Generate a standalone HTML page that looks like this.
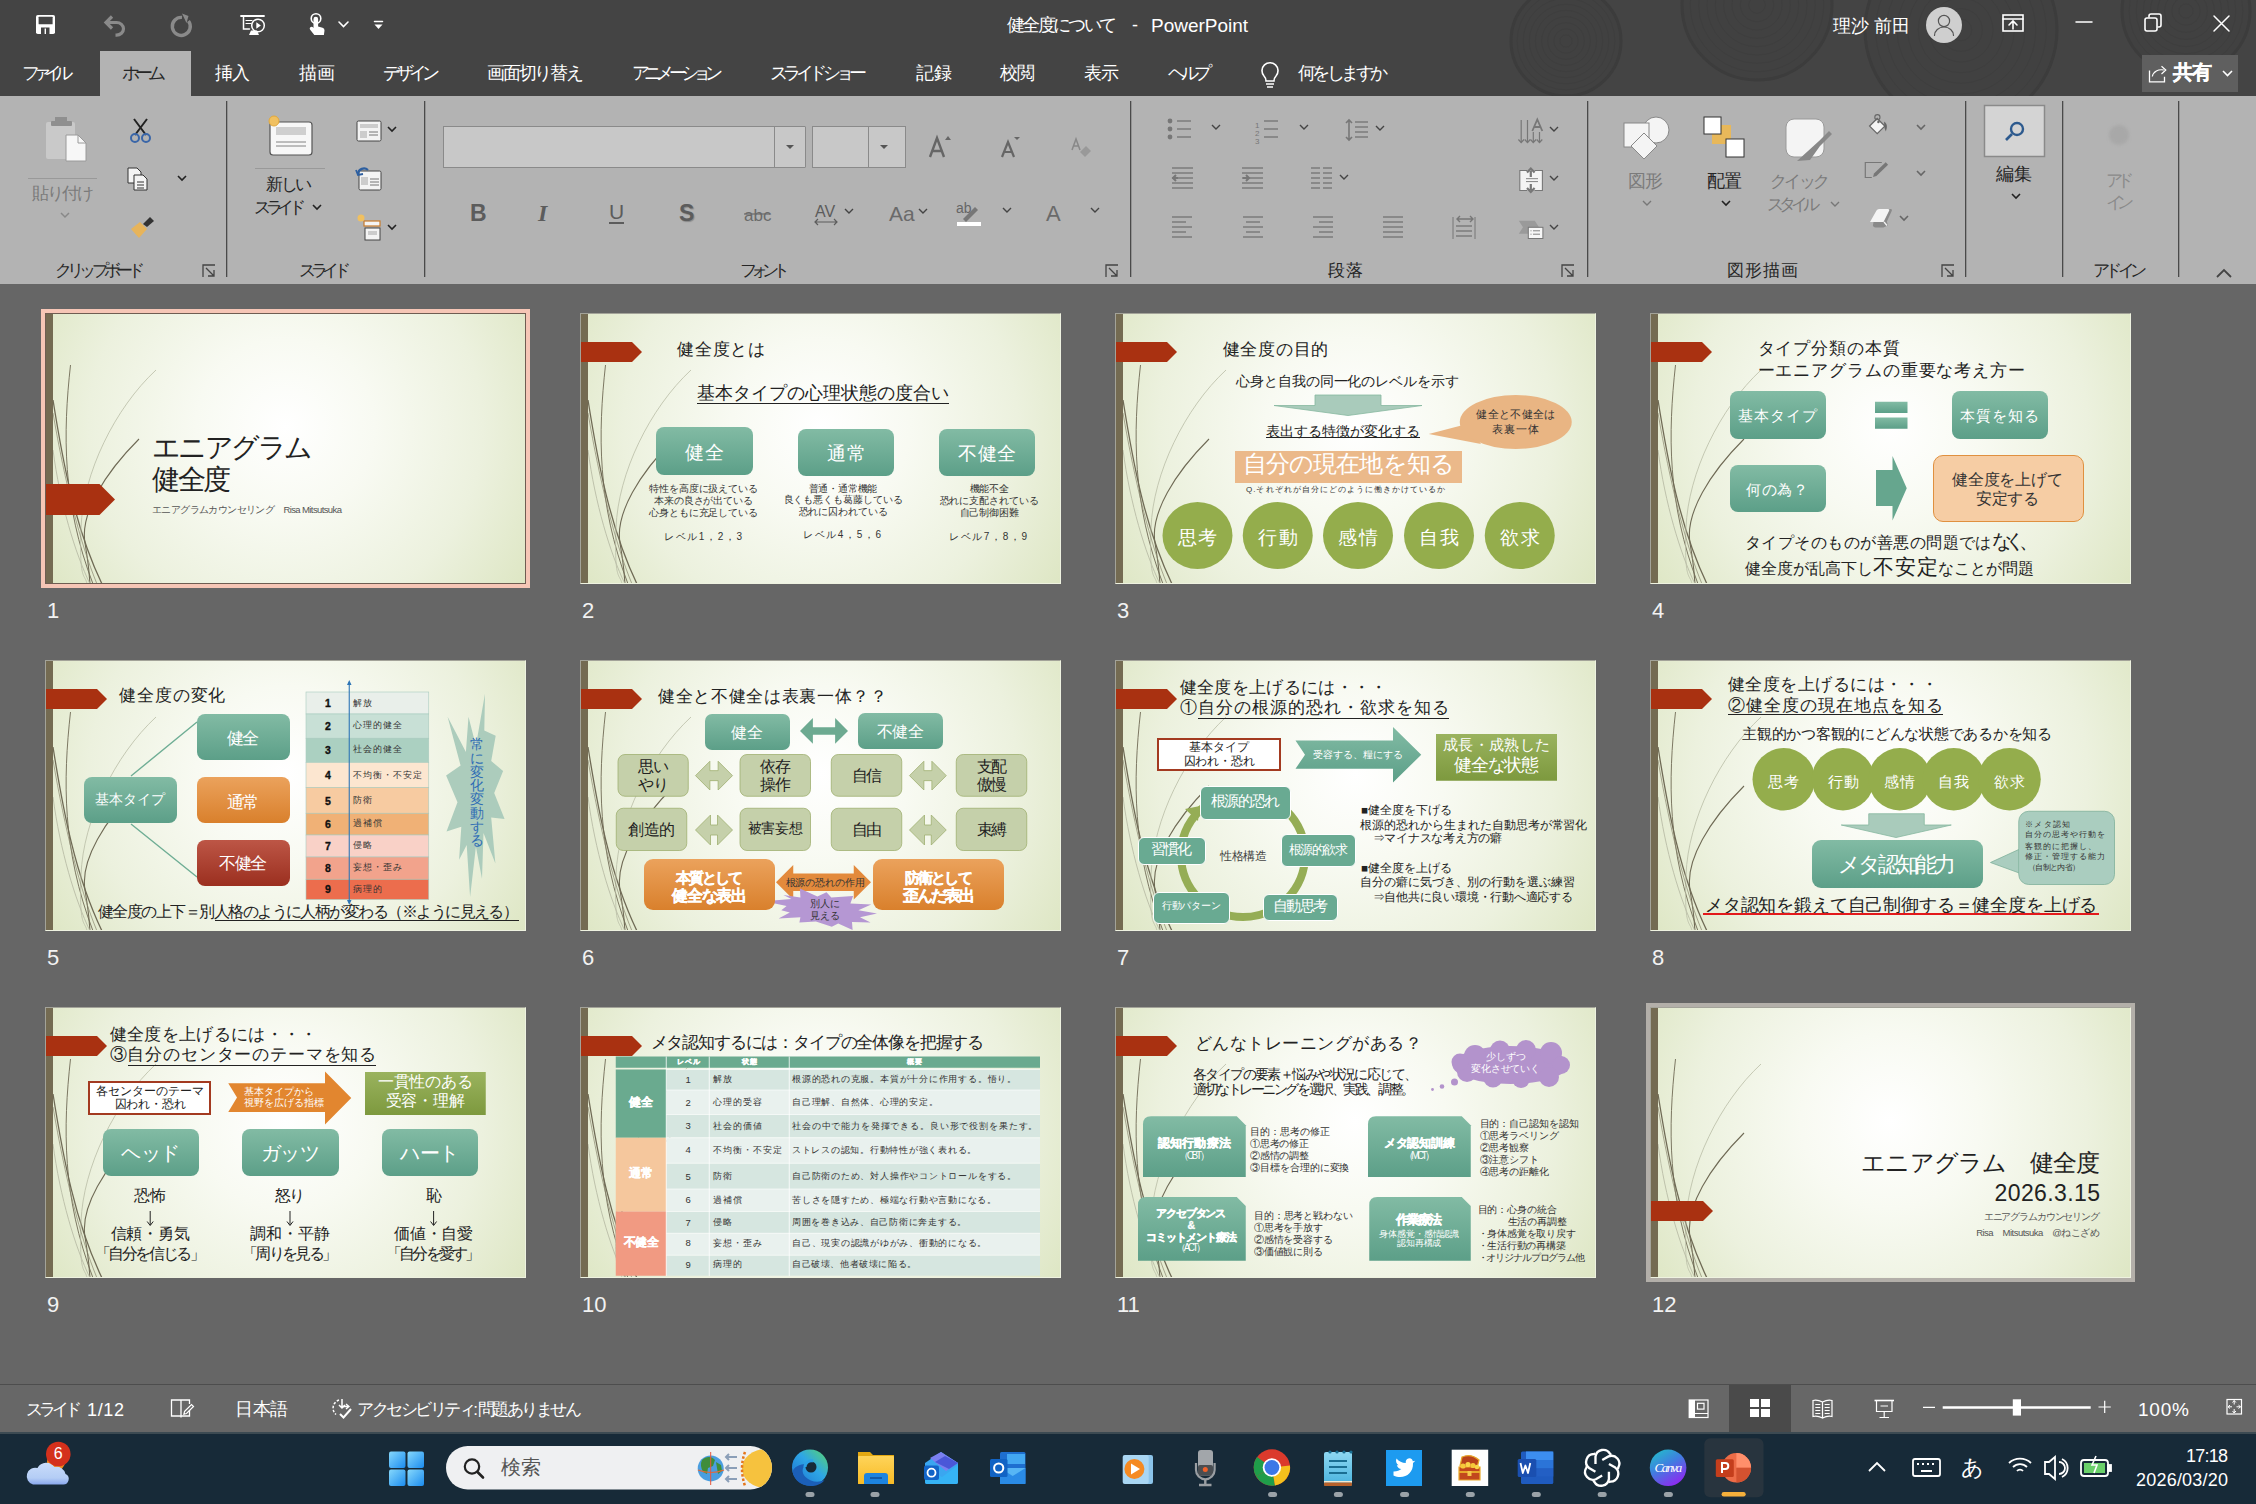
<!DOCTYPE html><html lang="ja"><head><meta charset="utf-8"><style>
html,body{margin:0;padding:0}
body{width:2256px;height:1504px;overflow:hidden;position:relative;background:#666666;font-family:"Liberation Sans",sans-serif}
.t{position:absolute;white-space:pre}
.sl{position:absolute;width:481px;height:271px;overflow:hidden;background:radial-gradient(ellipse 62% 108% at 50% 42%,#ffffff 0%,#f8faf2 30%,#ecf1de 66%,#dce5c1 100%)}
svg{overflow:visible}
</style></head><body><div style="position:absolute;left:0px;top:0px;width:2256px;height:96px;background:#444444"></div><svg style="position:absolute;left:0;top:0;overflow:hidden" width="2256" height="96"><circle cx="1566" cy="41" r="55" fill="#414141" stroke="#3c3c3c" stroke-width="3"/><circle cx="1566" cy="41" r="6.1" fill="none" stroke="#3e3e3e" stroke-width="1"/><circle cx="1566" cy="41" r="12.2" fill="none" stroke="#3e3e3e" stroke-width="1"/><circle cx="1566" cy="41" r="18.3" fill="none" stroke="#3e3e3e" stroke-width="1"/><circle cx="1566" cy="41" r="24.4" fill="none" stroke="#3e3e3e" stroke-width="1"/><circle cx="1566" cy="41" r="30.6" fill="none" stroke="#3e3e3e" stroke-width="1"/><circle cx="1566" cy="41" r="36.7" fill="none" stroke="#3e3e3e" stroke-width="1"/><circle cx="1566" cy="41" r="42.8" fill="none" stroke="#3e3e3e" stroke-width="1"/><circle cx="1566" cy="41" r="48.9" fill="none" stroke="#3e3e3e" stroke-width="1"/><circle cx="1757" cy="5" r="75" fill="#414141" stroke="#3c3c3c" stroke-width="3"/><circle cx="1757" cy="5" r="8.3" fill="none" stroke="#3e3e3e" stroke-width="1"/><circle cx="1757" cy="5" r="16.7" fill="none" stroke="#3e3e3e" stroke-width="1"/><circle cx="1757" cy="5" r="25.0" fill="none" stroke="#3e3e3e" stroke-width="1"/><circle cx="1757" cy="5" r="33.3" fill="none" stroke="#3e3e3e" stroke-width="1"/><circle cx="1757" cy="5" r="41.7" fill="none" stroke="#3e3e3e" stroke-width="1"/><circle cx="1757" cy="5" r="50.0" fill="none" stroke="#3e3e3e" stroke-width="1"/><circle cx="1757" cy="5" r="58.3" fill="none" stroke="#3e3e3e" stroke-width="1"/><circle cx="1757" cy="5" r="66.7" fill="none" stroke="#3e3e3e" stroke-width="1"/><circle cx="1961" cy="30" r="96" fill="#414141" stroke="#3c3c3c" stroke-width="3"/><circle cx="1961" cy="30" r="10.7" fill="none" stroke="#3e3e3e" stroke-width="1"/><circle cx="1961" cy="30" r="21.3" fill="none" stroke="#3e3e3e" stroke-width="1"/><circle cx="1961" cy="30" r="32.0" fill="none" stroke="#3e3e3e" stroke-width="1"/><circle cx="1961" cy="30" r="42.7" fill="none" stroke="#3e3e3e" stroke-width="1"/><circle cx="1961" cy="30" r="53.3" fill="none" stroke="#3e3e3e" stroke-width="1"/><circle cx="1961" cy="30" r="64.0" fill="none" stroke="#3e3e3e" stroke-width="1"/><circle cx="1961" cy="30" r="74.7" fill="none" stroke="#3e3e3e" stroke-width="1"/><circle cx="1961" cy="30" r="85.3" fill="none" stroke="#3e3e3e" stroke-width="1"/><circle cx="2186" cy="11" r="64" fill="#414141" stroke="#3c3c3c" stroke-width="3"/><circle cx="2186" cy="11" r="7.1" fill="none" stroke="#3e3e3e" stroke-width="1"/><circle cx="2186" cy="11" r="14.2" fill="none" stroke="#3e3e3e" stroke-width="1"/><circle cx="2186" cy="11" r="21.3" fill="none" stroke="#3e3e3e" stroke-width="1"/><circle cx="2186" cy="11" r="28.4" fill="none" stroke="#3e3e3e" stroke-width="1"/><circle cx="2186" cy="11" r="35.6" fill="none" stroke="#3e3e3e" stroke-width="1"/><circle cx="2186" cy="11" r="42.7" fill="none" stroke="#3e3e3e" stroke-width="1"/><circle cx="2186" cy="11" r="49.8" fill="none" stroke="#3e3e3e" stroke-width="1"/><circle cx="2186" cy="11" r="56.9" fill="none" stroke="#3e3e3e" stroke-width="1"/></svg><svg style="position:absolute;left:0;top:0" width="2256" height="48" fill="none" stroke-linecap="round"><rect x="36" y="15" width="19" height="19" rx="1.8" fill="#fff" stroke="none"/><rect x="38.6" y="16.7" width="14" height="7.5" rx="0.5" fill="#444" stroke="none"/><rect x="41" y="27.5" width="8.5" height="6.5" fill="#444" stroke="none"/><rect x="44.6" y="28.5" width="1.4" height="5.5" fill="#fff" stroke="none"/><path d="M106.5 22.5h10a7 6.3 0 0 1 0 12.6h-1" stroke="#8a8a8a" stroke-width="3.2" stroke-linecap="butt"/><path d="M112 16.5l-6 6 6 6" stroke="#8a8a8a" stroke-width="3.2" stroke-linecap="butt" stroke-linejoin="miter"/><path d="M188.5 21a9 9 0 1 1-6.5-3.6" stroke="#8a8a8a" stroke-width="3.4" stroke-linecap="butt"/><path d="M182 13.5l6.5 2.5-2 7z" fill="#8a8a8a" stroke="none"/><path d="M241 16h23" stroke="#fff" stroke-width="1.8"/><path d="M243.5 17.5v11.5h6" stroke="#fff" stroke-width="1.5"/><path d="M246 20.5h6M246 23.5h5" stroke="#fff" stroke-width="1.2"/><circle cx="258" cy="25.5" r="6.3" stroke="#fff" stroke-width="1.5"/><path d="M256.3 22.3l4.6 3.2-4.6 3.2z" fill="#fff" stroke="none"/><path d="M251 30.5l-2 4.5h10l-2-4.5" fill="#fff" stroke="none"/><circle cx="316" cy="18.5" r="4.8" stroke="#fff" stroke-width="1.6"/><path d="M313.5 19a2.3 2.3 0 0 1 4.6 0v7.5l4.5 1.2a2.6 2.6 0 0 1 1.9 2.7l-.6 4.6h-9.6l-4.3-5.5a1.8 1.8 0 0 1 2.6-2.4l.9.9z" fill="#fff" stroke="none"/><path d="M339 22l4.5 4.5 4.5-4.5" stroke="#fff" stroke-width="1.6"/><path d="M374.5 21.5h8" stroke="#fff" stroke-width="1.5"/><path d="M374.5 24.5h8l-4 4.5z" fill="#fff" stroke="none"/><circle cx="1944" cy="25" r="18" fill="#cfcfcf"/><circle cx="1944" cy="21" r="5.6" stroke="#555" stroke-width="1.2"/><path d="M1934.5 35.5a9.5 8.5 0 0 1 19 0" stroke="#555" stroke-width="1.2"/><rect x="2003" y="15" width="20" height="16" stroke="#fff" stroke-width="1.6"/><path d="M2003 19h20M2013 29v-8M2009 25l4-4 4 4" stroke="#fff" stroke-width="1.6"/><path d="M2076 22h16" stroke="#fff" stroke-width="1.5"/><rect x="2145" y="18" width="12" height="13" rx="2" stroke="#fff" stroke-width="1.6"/><path d="M2149 17v-1a2 2 0 0 1 2-2h8a2 2 0 0 1 2 2v9a2 2 0 0 1-2 2h-1" stroke="#fff" stroke-width="1.6"/><path d="M2214 16l15 15M2229 16l-15 15" stroke="#fff" stroke-width="1.5"/></svg><div class="t" style="left:1007.0px;top:16.4px;font-size:18px;line-height:18px;color:#ffffff;letter-spacing:-2.67px;">健全度について</div><div class="t" style="left:1132.0px;top:16.4px;font-size:18px;line-height:18px;color:#ffffff;">-</div><div class="t" style="left:1151.0px;top:15.9px;font-size:19px;line-height:19px;color:#ffffff;letter-spacing:-0.02px;">PowerPoint</div><div class="t" style="left:1833.0px;top:16.8px;font-size:18px;line-height:18px;color:#ffffff;letter-spacing:-0.00px;">理沙 前田</div><div style="position:absolute;left:100px;top:51px;width:91px;height:45px;background:#b3b3b3"></div><div class="t" style="left:22.0px;top:65.2px;font-size:17.5px;line-height:17.5px;color:#ffffff;letter-spacing:-7.00px;">ファイル</div><div class="t" style="left:122.0px;top:65.2px;font-size:17.5px;line-height:17.5px;color:#262626;letter-spacing:-5.00px;">ホーム</div><div class="t" style="left:215.0px;top:65.2px;font-size:17.5px;line-height:17.5px;color:#ffffff;letter-spacing:-1.00px;">挿入</div><div class="t" style="left:299.0px;top:65.2px;font-size:17.5px;line-height:17.5px;color:#ffffff;">描画</div><div class="t" style="left:383.0px;top:65.2px;font-size:17.5px;line-height:17.5px;color:#ffffff;letter-spacing:-5.00px;">デザイン</div><div class="t" style="left:487.0px;top:65.2px;font-size:17.5px;line-height:17.5px;color:#ffffff;letter-spacing:-2.20px;">画面切り替え</div><div class="t" style="left:632.0px;top:65.2px;font-size:17.5px;line-height:17.5px;color:#ffffff;letter-spacing:-5.83px;">アニメーション</div><div class="t" style="left:770.0px;top:65.2px;font-size:17.5px;line-height:17.5px;color:#ffffff;letter-spacing:-4.84px;">スライド ショー</div><div class="t" style="left:916.0px;top:65.2px;font-size:17.5px;line-height:17.5px;color:#ffffff;">記録</div><div class="t" style="left:1000.0px;top:65.2px;font-size:17.5px;line-height:17.5px;color:#ffffff;letter-spacing:-1.00px;">校閲</div><div class="t" style="left:1084.0px;top:65.2px;font-size:17.5px;line-height:17.5px;color:#ffffff;letter-spacing:-1.00px;">表示</div><div class="t" style="left:1168.0px;top:65.2px;font-size:17.5px;line-height:17.5px;color:#ffffff;letter-spacing:-5.00px;">ヘルプ</div><div class="t" style="left:1298.0px;top:65.2px;font-size:17.5px;line-height:17.5px;color:#ffffff;letter-spacing:-3.60px;">何をしますか</div><svg style="position:absolute;left:1255px;top:56px" width="30" height="34" fill="none" stroke="#fff" stroke-width="1.6"><path d="M9 20a8 8 0 1 1 12 0c-1.5 1.6-2 3-2 5h-8c0-2-.5-3.4-2-5z"/><path d="M11 28h8M12 31h6"/></svg><div style="position:absolute;left:2142px;top:55px;width:96px;height:37px;background:#5f5f5f"></div><svg style="position:absolute;left:2140px;top:50px" width="40" height="40" fill="none" stroke="#fff" stroke-width="1.3"><path d="M9.5 20.5v11.3h15v-5"/><path d="M12.3 26.5c1-5 6-7.5 11.5-6.5M21.5 16.3l4.3 3.7-4.3 4" stroke-width="1.2"/></svg><div class="t" style="left:2173.4px;top:62.9px;font-size:19.5px;line-height:19.5px;color:#ffffff;letter-spacing:-1.20px;font-weight:700;-webkit-text-stroke:0.35px #ffffff;">共有</div><svg style="position:absolute;left:2220px;top:67px" width="14" height="12" fill="none" stroke="#fff" stroke-width="1.6"><path d="M3 4l4.5 4.5 4.5-4.5"/></svg><div style="position:absolute;left:0px;top:96px;width:2256px;height:188px;background:#b3b3b3"></div><svg style="position:absolute;left:0;top:96px" width="2256" height="188" fill="none" stroke-linecap="butt"><rect x="226" y="5" width="1.3" height="176" fill="#4a4a4a" stroke="none"/><rect x="424" y="5" width="1.3" height="176" fill="#4a4a4a" stroke="none"/><rect x="1130" y="5" width="1.3" height="176" fill="#4a4a4a" stroke="none"/><rect x="1587" y="5" width="1.3" height="176" fill="#4a4a4a" stroke="none"/><rect x="1965" y="5" width="1.3" height="176" fill="#4a4a4a" stroke="none"/><rect x="2062" y="5" width="1.3" height="176" fill="#4a4a4a" stroke="none"/><rect x="2178" y="5" width="1.3" height="176" fill="#4a4a4a" stroke="none"/><rect x="46" y="26" width="29" height="37" rx="2" fill="#c9c9c9"/><rect x="55" y="21" width="12" height="7" fill="#8f8f8f"/><rect x="51" y="25" width="21" height="5" rx="1" fill="#8f8f8f"/><path d="M66 39h12l8 8v18H66z" fill="#f7f7f7" stroke="#9a9a9a" stroke-width="1"/><path d="M78 39v8h8" stroke="#9a9a9a" stroke-width="1"/><rect x="28" y="82" width="69" height="1" fill="#999" stroke="none"/><path d="M61 117l4 4 4-4" stroke="#888" stroke-width="1.5" fill="none"/><path d="M134 23l12 16M147 23l-12 16" stroke="#222" stroke-width="2"/><circle cx="135" cy="42" r="4" stroke="#3a66a8" stroke-width="2"/><circle cx="146" cy="42" r="4" stroke="#3a66a8" stroke-width="2"/><path d="M128 72h9l4 4v11h-13z" fill="#f4f4f4" stroke="#333" stroke-width="1"/><path d="M134 79h9l4 4v11h-13z" fill="#f4f4f4" stroke="#333" stroke-width="1"/><path d="M137 86h7M137 89h7M137 92h7" stroke="#333" stroke-width="1"/><path d="M178 80l4 4 4-4" stroke="#222" stroke-width="1.6" fill="none"/><path d="M131 133l9-7 7 7-8 9z" fill="#e7b45b"/><path d="M143 128l7-7 4 4-7 6z" fill="#333"/><path d="M203 181v-12h12M206 172l8 8M208 180h6v-6" stroke="#444" stroke-width="1.3" fill="none"/><rect x="270" y="26" width="42" height="33" rx="3" fill="#f7f7f7" stroke="#555" stroke-width="1.2"/><rect x="276" y="31" width="30" height="8" fill="#cfcfcf"/><path d="M276 46h30M276 50h30" stroke="#666" stroke-width="0.8"/><circle cx="274" cy="25" r="5" fill="#f0c060" stroke="#e2a93c" stroke-width="1"/><rect x="255" y="72" width="70" height="1" fill="#999" stroke="none"/><rect x="357" y="25" width="24" height="20" rx="1.5" fill="#f4f4f4" stroke="#444" stroke-width="1"/><rect x="360" y="28" width="18" height="4" fill="#ccc"/><rect x="360" y="35" width="7" height="7" fill="#ccc"/><path d="M369 36h9M369 39h9" stroke="#555" stroke-width="0.8"/><path d="M388 31l4 4 4-4" stroke="#222" stroke-width="1.6" fill="none"/><rect x="359" y="75" width="22" height="19" rx="1.5" fill="#f4f4f4" stroke="#444" stroke-width="1"/><rect x="361" y="81" width="7" height="8" fill="#ccc"/><path d="M370 83h9M370 86h9M370 89h9" stroke="#555" stroke-width="0.8"/><path d="M358 78a6 6 0 0 1 10-4" stroke="#2d5fa0" stroke-width="2.2"/><path d="M356 74l2 5 5-1" stroke="#2d5fa0" stroke-width="1.8"/><rect x="364" y="125" width="16" height="5" fill="#f4f4f4" stroke="#c77a2a" stroke-width="1.2"/><rect x="365" y="132" width="15" height="12" fill="#f4f4f4" stroke="#444" stroke-width="1"/><rect x="368" y="135" width="9" height="4" fill="#ccc"/><circle cx="361" cy="122" r="3.5" fill="#f0c060"/><path d="M388 129l4 4 4-4" stroke="#222" stroke-width="1.6" fill="none"/><rect x="443.5" y="30.5" width="462" height="41" fill="#c8c8c8" stroke="#8a8a8a" stroke-width="1"/><path d="M774.5 30.5v41M812.5 30.5v41M868.5 30.5v41" stroke="#8a8a8a" stroke-width="1"/><rect x="805" y="30" width="7" height="42" fill="#b3b3b3" stroke="none"/><path d="M805.5 30.5v41" stroke="#8a8a8a"/><path d="M786 49h8l-4 4z" fill="#555"/><path d="M880 49h8l-4 4z" fill="#555"/><path d="M930 61l7-19 7 19M933 55h9" stroke="#666" stroke-width="2.4"/><path d="M945 44l3-4 3 4z" fill="#666"/><path d="M1002 61l6-15 6 15M1005 56h7" stroke="#666" stroke-width="2.2"/><path d="M1014 41h6l-3 3z" fill="#666"/><path d="M1072 54l4-11 4 11M1073 50h6" stroke="#888" stroke-width="1.5"/><path d="M1080 56l6-6 5 5-6 6z" fill="#999"/><text x="470" y="125" font-family="Liberation Sans" font-weight="700" font-size="23" fill="#5c5c5c" stroke="none">B</text><text x="538" y="125" font-family="Liberation Serif" font-style="italic" font-weight="700" font-size="24" fill="#5c5c5c" stroke="none">I</text><text x="609" y="123" font-family="Liberation Sans" font-size="21" fill="#5c5c5c" stroke="none">U</text><rect x="609" y="126" width="15" height="2" fill="#5c5c5c" stroke="none"/><text x="679" y="125" font-family="Liberation Sans" font-weight="700" font-size="23" fill="#5c5c5c" stroke="none" style="text-shadow:1px 1px 1px #888">S</text><text x="744" y="125" font-family="Liberation Sans" font-size="17" fill="#6a6a6a" stroke="none">abc</text><path d="M744 118h26" stroke="#6a6a6a" stroke-width="1.2"/><text x="815" y="121" font-family="Liberation Sans" font-size="16" fill="#5c5c5c" stroke="none">AV</text><path d="M815 126h22M818 123l-3 3 3 3M834 123l3 3-3 3" stroke="#5c5c5c" stroke-width="1.2"/><path d="M845 113l4 4 4-4" stroke="#444" stroke-width="1.4" fill="none"/><text x="889" y="125" font-family="Liberation Sans" font-size="21" fill="#6a6a6a" stroke="none">Aa</text><path d="M919 113l4 4 4-4" stroke="#444" stroke-width="1.4" fill="none"/><text x="956" y="117" font-family="Liberation Sans" font-size="14" fill="#666" stroke="none">ab</text><path d="M963 123l12-12 3 3-12 12z" fill="#777"/><rect x="957" y="126" width="24" height="4" fill="#fff" stroke="none"/><path d="M1003 112l4 4 4-4" stroke="#444" stroke-width="1.4" fill="none"/><text x="1046" y="125" font-family="Liberation Sans" font-size="22" fill="#6a6a6a" stroke="none">A</text><path d="M1091 112l4 4 4-4" stroke="#444" stroke-width="1.4" fill="none"/><path d="M1106 181v-12h12M1109 172l8 8M1111 180h6v-6" stroke="#444" stroke-width="1.3" fill="none"/><circle cx="1170" cy="25" r="2.4" fill="#777" stroke="none"/><circle cx="1170" cy="33" r="2.4" fill="#777" stroke="none"/><circle cx="1170" cy="41" r="2.4" fill="#777" stroke="none"/><path d="M1177 25h14" stroke="#777" stroke-width="1.4"/><path d="M1177 33h14" stroke="#777" stroke-width="1.4"/><path d="M1177 41h14" stroke="#777" stroke-width="1.4"/><path d="M1212 29l4 4 4-4" stroke="#444" stroke-width="1.4" fill="none"/><text x="1255" y="32" font-family="Liberation Sans" font-size="8" fill="#777" stroke="none">1</text><text x="1255" y="40" font-family="Liberation Sans" font-size="8" fill="#777" stroke="none">2</text><text x="1255" y="48" font-family="Liberation Sans" font-size="8" fill="#777" stroke="none">3</text><path d="M1264 25h14" stroke="#777" stroke-width="1.4"/><path d="M1264 33h14" stroke="#777" stroke-width="1.4"/><path d="M1264 41h14" stroke="#777" stroke-width="1.4"/><path d="M1300 29l4 4 4-4" stroke="#444" stroke-width="1.4" fill="none"/><path d="M1349 24v20M1346 27l3-3 3 3M1346 41l3 3 3-3" stroke="#777" stroke-width="1.6"/><path d="M1355 26h13" stroke="#777" stroke-width="1.4"/><path d="M1355 31h13" stroke="#777" stroke-width="1.4"/><path d="M1355 36h13" stroke="#777" stroke-width="1.4"/><path d="M1355 41h13" stroke="#777" stroke-width="1.4"/><path d="M1376 30l4 4 4-4" stroke="#444" stroke-width="1.4" fill="none"/><path d="M1521.2 24v22.5M1527.5 24v22.5M1533.3 36v10.5M1539.5 36v10.5" stroke="#777" stroke-width="1.2"/><path d="M1518.4 43.5l2.8 3 2.8-3" stroke="#777" stroke-width="1.2"/><path d="M1524.7 43.5l2.8 3 2.8-3" stroke="#777" stroke-width="1.2"/><path d="M1530.5 43.5l2.8 3 2.8-3" stroke="#777" stroke-width="1.2"/><path d="M1536.7 43.5l2.8 3 2.8-3" stroke="#777" stroke-width="1.2"/><path d="M1532.3 35l5-11.5 5 11.5M1534.2 31h6.2" stroke="#777" stroke-width="1.8"/><path d="M1550 31l4 4 4-4" stroke="#444" stroke-width="1.4" fill="none"/><path d="M1172 72h21" stroke="#777" stroke-width="1.4"/><path d="M1172 77h21" stroke="#777" stroke-width="1.4"/><path d="M1172 82h21" stroke="#777" stroke-width="1.4"/><path d="M1172 87h21" stroke="#777" stroke-width="1.4"/><path d="M1172 92h21" stroke="#777" stroke-width="1.4"/><path d="M1178 82h-5M1176 79l-3 3 3 3" stroke="#777" stroke-width="2"/><path d="M1242 72h21" stroke="#777" stroke-width="1.4"/><path d="M1242 77h21" stroke="#777" stroke-width="1.4"/><path d="M1242 82h21" stroke="#777" stroke-width="1.4"/><path d="M1242 87h21" stroke="#777" stroke-width="1.4"/><path d="M1242 92h21" stroke="#777" stroke-width="1.4"/><path d="M1243 82h6M1246 79l3 3-3 3" stroke="#777" stroke-width="2"/><path d="M1311 72h9" stroke="#777" stroke-width="1.4"/><path d="M1311 77h9" stroke="#777" stroke-width="1.4"/><path d="M1311 82h9" stroke="#777" stroke-width="1.4"/><path d="M1311 87h9" stroke="#777" stroke-width="1.4"/><path d="M1311 92h9" stroke="#777" stroke-width="1.4"/><path d="M1323 72h9" stroke="#777" stroke-width="1.4"/><path d="M1323 77h9" stroke="#777" stroke-width="1.4"/><path d="M1323 82h9" stroke="#777" stroke-width="1.4"/><path d="M1323 87h9" stroke="#777" stroke-width="1.4"/><path d="M1323 92h9" stroke="#777" stroke-width="1.4"/><path d="M1340 79l4 4 4-4" stroke="#444" stroke-width="1.4" fill="none"/><path d="M1527 74.5h-7.2v20h7.2M1534.5 74.5h7.9v20h-7.9" fill="#f4f4f4" stroke="#777" stroke-width="1.1"/><rect x="1526.5" y="75" width="8.5" height="19" fill="#f4f4f4" stroke="none"/><path d="M1530.8 81v-6M1527 76.5l3.8-4 3.8 4M1530.8 88v6M1527 92l3.8 4 3.8-4" stroke="#777" stroke-width="2.2"/><path d="M1526 82.69999999999999h12M1526 85.6h12" stroke="#777" stroke-width="0.9"/><path d="M1550 80l4 4 4-4" stroke="#444" stroke-width="1.4" fill="none"/><path d="M1172 121h20" stroke="#777" stroke-width="1.4"/><path d="M1172 126h14" stroke="#777" stroke-width="1.4"/><path d="M1172 131h20" stroke="#777" stroke-width="1.4"/><path d="M1172 136h14" stroke="#777" stroke-width="1.4"/><path d="M1172 141h20" stroke="#777" stroke-width="1.4"/><path d="M1243.0 121h20" stroke="#777" stroke-width="1.4"/><path d="M1246.0 126h14" stroke="#777" stroke-width="1.4"/><path d="M1243.0 131h20" stroke="#777" stroke-width="1.4"/><path d="M1246.0 136h14" stroke="#777" stroke-width="1.4"/><path d="M1243.0 141h20" stroke="#777" stroke-width="1.4"/><path d="M1313 121h20" stroke="#777" stroke-width="1.4"/><path d="M1319 126h14" stroke="#777" stroke-width="1.4"/><path d="M1313 131h20" stroke="#777" stroke-width="1.4"/><path d="M1319 136h14" stroke="#777" stroke-width="1.4"/><path d="M1313 141h20" stroke="#777" stroke-width="1.4"/><path d="M1383 121h20" stroke="#777" stroke-width="1.4"/><path d="M1383 126h20" stroke="#777" stroke-width="1.4"/><path d="M1383 131h20" stroke="#777" stroke-width="1.4"/><path d="M1383 136h20" stroke="#777" stroke-width="1.4"/><path d="M1383 141h20" stroke="#777" stroke-width="1.4"/><path d="M1453 121v22M1475 121v22" stroke="#777" stroke-width="1"/><path d="M1456 130h16" stroke="#777" stroke-width="1.4"/><path d="M1456 135h16" stroke="#777" stroke-width="1.4"/><path d="M1456 140h16" stroke="#777" stroke-width="1.4"/><path d="M1457 123h16M1460 120l-3 3 3 3M1470 120l3 3-3 3" stroke="#777" stroke-width="1.4"/><path d="M1518.8 124.69999999999999h16l4.2 6.5-4.2 6.5h-16l4.2-6.5z" fill="#9a9a9a" stroke="none"/><rect x="1528.3" y="131.3" width="14.6" height="11.2" fill="#f7f7f7" stroke="#777" stroke-width="1"/><path d="M1533 134.8h7M1533 138.2h7M1530.5 134.8h1M1530.5 138.2h1" stroke="#777" stroke-width="0.9"/><path d="M1550 129l4 4 4-4" stroke="#444" stroke-width="1.4" fill="none"/><path d="M1562 181v-12h12M1565 172l8 8M1567 180h6v-6" stroke="#444" stroke-width="1.3" fill="none"/><circle cx="1656" cy="34" r="13" fill="#f4f4f4" stroke="#888" stroke-width="1"/><rect x="1624" y="27" width="25" height="24" fill="#f4f4f4" stroke="#888" stroke-width="1"/><path d="M1644 37l13 13-13 13-13-13z" fill="#f4f4f4" stroke="#888" stroke-width="1"/><path d="M1643 105l4 4 4-4" stroke="#777" stroke-width="1.4" fill="none"/><rect x="1712" y="29" width="19" height="19" fill="#e8b85a" stroke="none"/><rect x="1704" y="21" width="17" height="17" fill="#fff" stroke="#333" stroke-width="1"/><rect x="1726" y="43" width="18" height="18" fill="#fff" stroke="#333" stroke-width="1"/><path d="M1722 105l4 4 4-4" stroke="#222" stroke-width="1.6" fill="none"/><rect x="1786" y="23" width="38" height="38" rx="8" fill="#f4f4f4" stroke="#999" stroke-width="1"/><path d="M1797 65l22-20 10-10 3 3-12 12-10 14z" fill="#888" stroke="none"/><path d="M1831 106l4 4 4-4" stroke="#777" stroke-width="1.4" fill="none"/><path d="M1877.2 22.5l7.6 7.6-7.6 7.6-7.6-7.6z" fill="#f4f4f4" stroke="#666" stroke-width="1.3"/><circle cx="1877.4" cy="21.200000000000003" r="2.6" fill="none" stroke="#666" stroke-width="1.1"/><circle cx="1878.4" cy="26" r="1.2" fill="#666"/><path d="M1884 25.5q3.5 2 2.8 6.5l-1 3.5-1.3-3.5z" fill="#666" stroke="none"/><path d="M1917 29l4 4 4-4" stroke="#666" stroke-width="1.6" fill="none"/><path d="M1881.8 66.5h-16.5v15h6.5" stroke="#777" stroke-width="1.2"/><path d="M1873 81l1-3.5 11.7-11.2 2.4 2.4-11.7 11.2z" fill="#777" stroke="none"/><path d="M1917 75l4 4 4-4" stroke="#666" stroke-width="1.6" fill="none"/><path d="M1873.5 126l6-11.5q1-1.5 3-1.5h8q2 0 1.2 2l-4.8 10.5 1 4-4.5 2h-8q-2 0-2.5-2z" fill="#8a8a8a" stroke="none"/><path d="M1870 126l6.5-11.5q.8-1.5 2.5-1.5h9q2 0 1 2l-5.5 11h-12q-1.5 0-1.5 0z" fill="#f4f4f4" stroke="none"/><path d="M1884 126l3 3.5" stroke="#f4f4f4" stroke-width="1.3"/><path d="M1900 120l4 4 4-4" stroke="#666" stroke-width="1.6" fill="none"/><path d="M1942 181v-12h12M1945 172l8 8M1947 180h6v-6" stroke="#444" stroke-width="1.3" fill="none"/><rect x="1984.5" y="9.5" width="60" height="51" fill="#d4d4d4" stroke="#8a8a8a" stroke-width="1.5"/><circle cx="2017" cy="33" r="6" stroke="#2d5a8e" stroke-width="2.4"/><path d="M2012 38l-6 6" stroke="#2d5a8e" stroke-width="2.6"/><path d="M2012 98l4 4 4-4" stroke="#222" stroke-width="1.6" fill="none"/><circle cx="2119" cy="39" r="10" fill="#a8a8a8" stroke="none" style="filter:blur(1.5px)"/><path d="M2217 181l7-7 7 7" stroke="#444" stroke-width="1.8"/></svg><div class="t" style="left:32.0px;top:185.2px;font-size:17px;line-height:17px;color:#7b7b7b;letter-spacing:-2.00px;">貼り付け</div><div class="t" style="left:266.0px;top:176.2px;font-size:17px;line-height:17px;color:#262626;letter-spacing:-2.50px;">新しい</div><div class="t" style="left:254.0px;top:199.2px;font-size:17px;line-height:17px;color:#262626;letter-spacing:-5.33px;">スライド</div><svg style="position:absolute;left:311px;top:203px" width="12" height="10" fill="none" stroke="#222" stroke-width="1.6"><path d="M2 2l4 4 4-4"/></svg><div class="t" style="left:1628.0px;top:172.9px;font-size:17.5px;line-height:17.5px;color:#7b7b7b;letter-spacing:-1.00px;">図形</div><div class="t" style="left:1707.0px;top:172.9px;font-size:17.5px;line-height:17.5px;color:#262626;letter-spacing:-1.00px;">配置</div><div class="t" style="left:1770.0px;top:173.2px;font-size:17px;line-height:17px;color:#7b7b7b;letter-spacing:-2.67px;">クイック</div><div class="t" style="left:1767.0px;top:196.2px;font-size:17px;line-height:17px;color:#7b7b7b;letter-spacing:-5.00px;">スタイル</div><div class="t" style="left:1996.0px;top:165.9px;font-size:17.5px;line-height:17.5px;color:#262626;">編集</div><div class="t" style="left:2106.0px;top:172.2px;font-size:17px;line-height:17px;color:#8a8a8a;letter-spacing:-6.00px;">アド</div><div class="t" style="left:2106.0px;top:194.2px;font-size:17px;line-height:17px;color:#8a8a8a;letter-spacing:-6.00px;">イン</div><div class="t" style="left:55.0px;top:262.2px;font-size:17px;line-height:17px;color:#262626;letter-spacing:-4.83px;">クリップボード</div><div class="t" style="left:299.0px;top:262.2px;font-size:17px;line-height:17px;color:#262626;letter-spacing:-5.33px;">スライド</div><div class="t" style="left:740.0px;top:262.2px;font-size:17px;line-height:17px;color:#262626;letter-spacing:-6.00px;">フォント</div><div class="t" style="left:1328.0px;top:262.2px;font-size:17px;line-height:17px;color:#262626;letter-spacing:1.00px;">段落</div><div class="t" style="left:1727.0px;top:262.2px;font-size:17px;line-height:17px;color:#262626;letter-spacing:1.00px;">図形描画</div><div class="t" style="left:2093.0px;top:262.2px;font-size:17px;line-height:17px;color:#262626;letter-spacing:-4.67px;">アドイン</div><div style="position:absolute;left:41px;top:309px;width:489px;height:279px;background:#f6c6b6"></div><div class="sl" style="left:45px;top:313px"><svg style="position:absolute;left:0;top:0" width="481" height="271" fill="none"><path d="M8 87C18 150 30 215 57 271" stroke="#6f6a55" stroke-width="1.3"/><path d="M25.5 52C18 120 17 190 48 271" stroke="#6f6a55" stroke-width="0.9"/><path d="M94 126C60 160 35 200 40 230S44 262 45 271" stroke="#6f6a55" stroke-width="1.1"/><path d="M111 57C70 95 38 160 36 215S40 260 42 271" stroke="#b9bca6" stroke-width="0.8"/><path d="M8 137C15 190 30 240 45 271" stroke="#b9bca6" stroke-width="0.9"/><path d="M8 100C20 170 35 230 52 271" stroke="#8a866f" stroke-width="0.7"/></svg><div style="position:absolute;left:0;top:0;width:8px;height:271px;background:#746b52"></div><svg style="position:absolute;left:0;top:171px" width="71" height="31"><path d="M0 0H54.5L70 15.5L54.5 31H0z" fill="#a93111"/></svg><div class="t" style="left:107.0px;top:120.9px;font-size:28px;line-height:28px;color:#222;letter-spacing:-2.60px;">エニアグラム</div><div class="t" style="left:107.0px;top:152.9px;font-size:28px;line-height:28px;color:#222;letter-spacing:-2.50px;">健全度</div><div class="t" style="left:107.0px;top:191.6px;font-size:9.5px;line-height:9.5px;color:#555;letter-spacing:-0.61px;">エニアグラムカウンセリング　Risa Mitsutsuka</div><div style="position:absolute;left:0;top:0;width:481px;height:271px;box-sizing:border-box;border:1px solid #6f5d52"></div></div><div class="sl" style="left:580px;top:313px"><svg style="position:absolute;left:0;top:0" width="481" height="271" fill="none"><path d="M8 87C18 150 30 215 57 271" stroke="#6f6a55" stroke-width="1.3"/><path d="M25.5 52C18 120 17 190 48 271" stroke="#6f6a55" stroke-width="0.9"/><path d="M94 126C60 160 35 200 40 230S44 262 45 271" stroke="#6f6a55" stroke-width="1.1"/><path d="M111 57C70 95 38 160 36 215S40 260 42 271" stroke="#b9bca6" stroke-width="0.8"/><path d="M8 137C15 190 30 240 45 271" stroke="#b9bca6" stroke-width="0.9"/><path d="M8 100C20 170 35 230 52 271" stroke="#8a866f" stroke-width="0.7"/></svg><div style="position:absolute;left:0;top:0;width:8px;height:271px;background:#746b52"></div><svg style="position:absolute;left:0;top:29px" width="63" height="20"><path d="M0 0H52.0L62 10.0L52.0 20H0z" fill="#a93111"/></svg><div class="t" style="left:97.0px;top:28.2px;font-size:17px;line-height:17px;color:#222;letter-spacing:0.75px;">健全度とは</div><div class="t" style="left:117.0px;top:71.1px;font-size:18px;line-height:18px;color:#222;">基本タイプの心理状態の度合い</div><div style="position:absolute;left:117px;top:90px;width:252px;height:1.2px;background:#222"></div><div style="position:absolute;left:76px;top:114px;width:97px;height:48px;background:linear-gradient(#82bba4,#5c9f88);border-radius:8px;"></div><div style="position:absolute;left:218px;top:116px;width:96px;height:47px;background:linear-gradient(#82bba4,#5c9f88);border-radius:8px;"></div><div style="position:absolute;left:359px;top:116px;width:96px;height:47px;background:linear-gradient(#82bba4,#5c9f88);border-radius:8px;"></div><div class="t" style="left:105.0px;top:130.1px;font-size:19px;line-height:19px;color:#fff;letter-spacing:1.00px;">健全</div><div class="t" style="left:246.5px;top:131.1px;font-size:19px;line-height:19px;color:#fff;letter-spacing:1.00px;">通常</div><div class="t" style="left:377.8px;top:131.1px;font-size:19px;line-height:19px;color:#fff;letter-spacing:0.75px;">不健全</div><div class="t" style="left:69.0px;top:170.8px;font-size:10px;line-height:10px;color:#333;letter-spacing:-0.10px;">特性を高度に扱えている</div><div class="t" style="left:74.0px;top:182.8px;font-size:10px;line-height:10px;color:#333;letter-spacing:-0.11px;">本来の良さが出ている</div><div class="t" style="left:69.0px;top:194.8px;font-size:10px;line-height:10px;color:#333;letter-spacing:-0.10px;">心身ともに充足している</div><div class="t" style="left:228.5px;top:170.8px;font-size:10px;line-height:10px;color:#333;letter-spacing:-0.17px;">普通・通常機能</div><div class="t" style="left:203.5px;top:182.3px;font-size:10px;line-height:10px;color:#333;letter-spacing:-0.09px;">良くも悪くも葛藤している</div><div class="t" style="left:218.5px;top:193.8px;font-size:10px;line-height:10px;color:#333;letter-spacing:-0.12px;">恐れに囚われている</div><div class="t" style="left:389.5px;top:170.8px;font-size:10px;line-height:10px;color:#333;letter-spacing:-0.33px;">機能不全</div><div class="t" style="left:359.5px;top:182.8px;font-size:10px;line-height:10px;color:#333;letter-spacing:-0.11px;">恐れに支配されている</div><div class="t" style="left:379.5px;top:194.8px;font-size:10px;line-height:10px;color:#333;letter-spacing:-0.20px;">自己制御困難</div><div class="t" style="left:84.0px;top:218.8px;font-size:10px;line-height:10px;color:#333;letter-spacing:1.62px;">レベル1，2，3</div><div class="t" style="left:223.0px;top:216.8px;font-size:10px;line-height:10px;color:#333;letter-spacing:1.62px;">レベル4，5，6</div><div class="t" style="left:369.0px;top:218.8px;font-size:10px;line-height:10px;color:#333;letter-spacing:1.62px;">レベル7，8，9</div><div style="position:absolute;left:0;top:0;width:481px;height:271px;box-sizing:border-box;border:1px solid #a3a399;border-right-color:#eef2e0;border-bottom-color:#eef2e0"></div></div><div class="sl" style="left:1115px;top:313px"><svg style="position:absolute;left:0;top:0" width="481" height="271" fill="none"><path d="M8 87C18 150 30 215 57 271" stroke="#6f6a55" stroke-width="1.3"/><path d="M25.5 52C18 120 17 190 48 271" stroke="#6f6a55" stroke-width="0.9"/><path d="M94 126C60 160 35 200 40 230S44 262 45 271" stroke="#6f6a55" stroke-width="1.1"/><path d="M111 57C70 95 38 160 36 215S40 260 42 271" stroke="#b9bca6" stroke-width="0.8"/><path d="M8 137C15 190 30 240 45 271" stroke="#b9bca6" stroke-width="0.9"/><path d="M8 100C20 170 35 230 52 271" stroke="#8a866f" stroke-width="0.7"/></svg><div style="position:absolute;left:0;top:0;width:8px;height:271px;background:#746b52"></div><svg style="position:absolute;left:0;top:29px" width="63" height="20"><path d="M0 0H52.0L62 10.0L52.0 20H0z" fill="#a93111"/></svg><div class="t" style="left:107.5px;top:27.7px;font-size:17px;line-height:17px;color:#222;letter-spacing:0.80px;">健全度の目的</div><div class="t" style="left:121.0px;top:60.5px;font-size:14px;line-height:14px;color:#222;letter-spacing:-0.07px;">心身と自我の同一化のレベルを示す</div><svg style="position:absolute;left:0px;top:0px" width="481" height="271"><path d="M200 82H266V92.5H307L233 102.5L159 92.5H200Z" fill="#a9cbbb" stroke="#86b7a0" stroke-width="0.8"/><path d="M352 111L313.75 121L366 131Z" fill="#e9b583"/><ellipse cx="400.75" cy="109" rx="56" ry="27" fill="#e9b583"/><rect x="120" y="138" width="227" height="32" fill="#ebb98a"/><ellipse cx="82.5" cy="222.5" rx="35" ry="33.5" fill="#94ad4c"/><ellipse cx="162.75" cy="222.5" rx="35" ry="33.5" fill="#94ad4c"/><ellipse cx="243" cy="222.5" rx="35" ry="33.5" fill="#94ad4c"/><ellipse cx="324" cy="222.5" rx="35" ry="33.5" fill="#94ad4c"/><ellipse cx="404.75" cy="222.5" rx="35" ry="33.5" fill="#94ad4c"/></svg><div class="t" style="left:150.5px;top:110.5px;font-size:14px;line-height:14px;color:#222;">表出する特徴が変化する</div><div style="position:absolute;left:150.5px;top:123.5px;width:154px;height:1.2px;background:#222"></div><div class="t" style="left:361.2px;top:96.2px;font-size:11px;line-height:11px;color:#333;letter-spacing:0.33px;">健全と不健全は</div><div class="t" style="left:377.2px;top:111.2px;font-size:11px;line-height:11px;color:#333;letter-spacing:1.00px;">表裏一体</div><div class="t" style="left:127.5px;top:139.0px;font-size:24px;line-height:24px;color:#fff;letter-spacing:-0.81px;">自分の現在地を知る</div><div class="t" style="left:131.0px;top:173.3px;font-size:8px;line-height:8px;color:#333;letter-spacing:1.02px;">Q.それぞれが自分にどのように働きかけているか</div><div class="t" style="left:62.8px;top:215.1px;font-size:19px;line-height:19px;color:#fff;letter-spacing:1.50px;">思考</div><div class="t" style="left:143.0px;top:215.1px;font-size:19px;line-height:19px;color:#fff;letter-spacing:1.50px;">行動</div><div class="t" style="left:223.2px;top:215.1px;font-size:19px;line-height:19px;color:#fff;letter-spacing:1.50px;">感情</div><div class="t" style="left:304.2px;top:215.1px;font-size:19px;line-height:19px;color:#fff;letter-spacing:1.50px;">自我</div><div class="t" style="left:385.0px;top:215.1px;font-size:19px;line-height:19px;color:#fff;letter-spacing:1.50px;">欲求</div><div style="position:absolute;left:0;top:0;width:481px;height:271px;box-sizing:border-box;border:1px solid #a3a399;border-right-color:#eef2e0;border-bottom-color:#eef2e0"></div></div><div class="sl" style="left:1650px;top:313px"><svg style="position:absolute;left:0;top:0" width="481" height="271" fill="none"><path d="M8 87C18 150 30 215 57 271" stroke="#6f6a55" stroke-width="1.3"/><path d="M25.5 52C18 120 17 190 48 271" stroke="#6f6a55" stroke-width="0.9"/><path d="M94 126C60 160 35 200 40 230S44 262 45 271" stroke="#6f6a55" stroke-width="1.1"/><path d="M111 57C70 95 38 160 36 215S40 260 42 271" stroke="#b9bca6" stroke-width="0.8"/><path d="M8 137C15 190 30 240 45 271" stroke="#b9bca6" stroke-width="0.9"/><path d="M8 100C20 170 35 230 52 271" stroke="#8a866f" stroke-width="0.7"/></svg><div style="position:absolute;left:0;top:0;width:8px;height:271px;background:#746b52"></div><svg style="position:absolute;left:0;top:29px" width="63" height="20"><path d="M0 0H52.0L62 10.0L52.0 20H0z" fill="#a93111"/></svg><div class="t" style="left:107.5px;top:27.2px;font-size:17px;line-height:17px;color:#222;letter-spacing:0.93px;">タイプ分類の本質</div><div class="t" style="left:107.5px;top:48.7px;font-size:17px;line-height:17px;color:#222;letter-spacing:0.89px;">ーエニアグラムの重要な考え方ー</div><div style="position:absolute;left:80px;top:78px;width:96px;height:47.5px;background:linear-gradient(#82bba4,#5c9f88);border-radius:8px;"></div><div style="position:absolute;left:302px;top:78px;width:95.5px;height:47.5px;background:linear-gradient(#82bba4,#5c9f88);border-radius:8px;"></div><div style="position:absolute;left:80px;top:152px;width:96px;height:46.75px;background:linear-gradient(#82bba4,#5c9f88);border-radius:8px;"></div><svg style="position:absolute;left:0px;top:0px" width="481" height="271"><defs><linearGradient id="g4" x1="0" y1="0" x2="0" y2="1"><stop offset="0" stop-color="#82bba4"/><stop offset="1" stop-color="#5c9f88"/></linearGradient></defs><rect x="225" y="88.75" width="32.5" height="11.25" fill="url(#g4)"/><rect x="225" y="104.5" width="32.5" height="11.25" fill="url(#g4)"/><path d="M226 157H242.5V143L256.75 175.25L242.5 207.5V193H226Z" fill="#66a68e"/></svg><div style="position:absolute;left:283px;top:142px;width:150.75px;height:66.75px;background:#f6cda4;border:1px solid #e0903f;border-radius:10px;box-sizing:border-box"></div><div class="t" style="left:87.8px;top:95.2px;font-size:15px;line-height:15px;color:#fff;letter-spacing:1.12px;">基本タイプ</div><div class="t" style="left:310.0px;top:95.2px;font-size:15px;line-height:15px;color:#fff;letter-spacing:1.00px;">本質を知る</div><div class="t" style="left:96.0px;top:168.8px;font-size:15px;line-height:15px;color:#fff;letter-spacing:0.67px;">何の為？</div><div class="t" style="left:302.0px;top:159.2px;font-size:16px;line-height:16px;color:#333;letter-spacing:-0.25px;">健全度を上げて</div><div class="t" style="left:326.0px;top:178.3px;font-size:16px;line-height:16px;color:#333;letter-spacing:-0.33px;">安定する</div><div class="t" style="left:95.0px;top:221.9px;font-size:15.5px;line-height:15.5px;color:#222;letter-spacing:0.46px;">タイプそのものが善悪の問題では</div><div class="t" style="left:341.5px;top:218.1px;font-size:20px;line-height:20px;color:#222;letter-spacing:-6.50px;">なく、</div><div class="t" style="left:95.0px;top:247.9px;font-size:15.5px;line-height:15.5px;color:#222;letter-spacing:-0.07px;">健全度が乱高下し</div><div class="t" style="left:222.5px;top:243.1px;font-size:21px;line-height:21px;color:#222;letter-spacing:1.00px;">不安定</div><div class="t" style="left:287.5px;top:247.9px;font-size:15.5px;line-height:15.5px;color:#222;letter-spacing:0.05px;">なことが問題</div><div style="position:absolute;left:0;top:0;width:481px;height:271px;box-sizing:border-box;border:1px solid #a3a399;border-right-color:#eef2e0;border-bottom-color:#eef2e0"></div></div><div class="sl" style="left:45px;top:660px"><svg style="position:absolute;left:0;top:0" width="481" height="271" fill="none"><path d="M8 87C18 150 30 215 57 271" stroke="#6f6a55" stroke-width="1.3"/><path d="M25.5 52C18 120 17 190 48 271" stroke="#6f6a55" stroke-width="0.9"/><path d="M94 126C60 160 35 200 40 230S44 262 45 271" stroke="#6f6a55" stroke-width="1.1"/><path d="M111 57C70 95 38 160 36 215S40 260 42 271" stroke="#b9bca6" stroke-width="0.8"/><path d="M8 137C15 190 30 240 45 271" stroke="#b9bca6" stroke-width="0.9"/><path d="M8 100C20 170 35 230 52 271" stroke="#8a866f" stroke-width="0.7"/></svg><div style="position:absolute;left:0;top:0;width:8px;height:271px;background:#746b52"></div><svg style="position:absolute;left:0;top:29px" width="63" height="20"><path d="M0 0H52.0L62 10.0L52.0 20H0z" fill="#a93111"/></svg><div class="t" style="left:74.0px;top:27.2px;font-size:17px;line-height:17px;color:#222;letter-spacing:0.90px;">健全度の変化</div><svg style="position:absolute;left:0px;top:0px" width="481" height="271"><path d="M86 116L152 62M86 164L152 217" stroke="#6fae95" stroke-width="1.4"/><rect x="261" y="32" width="122.75" height="22.00" fill="#e9efea" stroke="#a9cbbf" stroke-width="0.6"/><rect x="261" y="54" width="122.75" height="24.25" fill="#c8e0d6" stroke="#a9cbbf" stroke-width="0.6"/><rect x="261" y="78.25" width="122.75" height="24.25" fill="#abd0c1" stroke="#a9cbbf" stroke-width="0.6"/><rect x="261" y="102.5" width="122.75" height="25.00" fill="#fce6d0" stroke="#a9cbbf" stroke-width="0.6"/><rect x="261" y="127.5" width="122.75" height="25.75" fill="#f7cba1" stroke="#a9cbbf" stroke-width="0.6"/><rect x="261" y="153.25" width="122.75" height="21.75" fill="#f0b176" stroke="#a9cbbf" stroke-width="0.6"/><rect x="261" y="175" width="122.75" height="22.00" fill="#f9d1c7" stroke="#a9cbbf" stroke-width="0.6"/><rect x="261" y="197" width="122.75" height="22.25" fill="#f2a38c" stroke="#a9cbbf" stroke-width="0.6"/><rect x="261" y="219.25" width="122.75" height="20.25" fill="#ec6d4d" stroke="#a9cbbf" stroke-width="0.6"/><path d="M304.25 22V243" stroke="#2e75b6" stroke-width="1.1"/><path d="M302 25L304.25 20L306.5 25ZM302 240L304.25 245L306.5 240Z" fill="#2e75b6"/><polygon points="440,33.8 439.3,70.5 450.7,75.8 446.2,101 458.1,111 449.2,133.1 459.6,159.1 446.2,157.6 450.4,203.5 438.5,172.9 437,218.8 430.9,186.7 425.1,237.1 421.7,185.1 414.1,199.7 416.3,166.8 401.5,171.4 412.5,142.3 401.1,115.6 415.6,105.6 402.6,56.7 420.9,91.9 423.5,56.7 430.9,85.7" fill="#acccbc"/></svg><div style="position:absolute;left:38.75px;top:117px;width:93px;height:46px;background:linear-gradient(#82bba4,#5c9f88);border-radius:8px;"></div><div style="position:absolute;left:151.75px;top:53.75px;width:93.25px;height:46.25px;background:linear-gradient(#82bba4,#5c9f88);border-radius:8px;"></div><div style="position:absolute;left:151.75px;top:117px;width:93.25px;height:46px;background:linear-gradient(#eba25c,#d9802c);border-radius:8px;"></div><div style="position:absolute;left:151.75px;top:180px;width:93.25px;height:46px;background:linear-gradient(#bd5646,#9b2f1f);border-radius:8px;"></div><div class="t" style="left:50.2px;top:132.1px;font-size:14px;line-height:14px;color:#fff;">基本タイプ</div><div class="t" style="left:182.4px;top:69.9px;font-size:17px;line-height:17px;color:#fff;letter-spacing:-2.00px;">健全</div><div class="t" style="left:182.4px;top:133.7px;font-size:17px;line-height:17px;color:#fff;letter-spacing:-2.00px;">通常</div><div class="t" style="left:174.4px;top:195.2px;font-size:17px;line-height:17px;color:#fff;letter-spacing:-1.50px;">不健全</div><div class="t" style="left:53.0px;top:244.2px;font-size:16px;line-height:16px;color:#222;letter-spacing:-1.54px;">健全度の上下＝別人格のように人柄が変わる（※ように見える）</div><div style="position:absolute;left:170px;top:260px;width:303.75px;height:1px;background:#222"></div><div class="t" style="left:280.0px;top:38.3px;font-size:10.5px;line-height:10.5px;color:#111;font-weight:700;-webkit-text-stroke:0.35px #111;">1</div><div class="t" style="left:307.5px;top:39.1px;font-size:9px;line-height:9px;color:#333;letter-spacing:1.00px;">解放</div><div class="t" style="left:280.0px;top:60.5px;font-size:10.5px;line-height:10.5px;color:#111;font-weight:700;-webkit-text-stroke:0.35px #111;">2</div><div class="t" style="left:307.5px;top:61.3px;font-size:9px;line-height:9px;color:#333;letter-spacing:1.00px;">心理的健全</div><div class="t" style="left:280.0px;top:84.5px;font-size:10.5px;line-height:10.5px;color:#111;font-weight:700;-webkit-text-stroke:0.35px #111;">3</div><div class="t" style="left:307.5px;top:85.3px;font-size:9px;line-height:9px;color:#333;letter-spacing:1.00px;">社会的健全</div><div class="t" style="left:280.0px;top:110.0px;font-size:10.5px;line-height:10.5px;color:#111;font-weight:700;-webkit-text-stroke:0.35px #111;">4</div><div class="t" style="left:307.5px;top:110.8px;font-size:9px;line-height:9px;color:#333;letter-spacing:1.00px;">不均衡・不安定</div><div class="t" style="left:280.0px;top:135.5px;font-size:10.5px;line-height:10.5px;color:#111;font-weight:700;-webkit-text-stroke:0.35px #111;">5</div><div class="t" style="left:307.5px;top:136.3px;font-size:9px;line-height:9px;color:#333;letter-spacing:1.00px;">防衛</div><div class="t" style="left:280.0px;top:158.5px;font-size:10.5px;line-height:10.5px;color:#111;font-weight:700;-webkit-text-stroke:0.35px #111;">6</div><div class="t" style="left:307.5px;top:159.3px;font-size:9px;line-height:9px;color:#333;letter-spacing:1.25px;">過補償</div><div class="t" style="left:280.0px;top:180.5px;font-size:10.5px;line-height:10.5px;color:#111;font-weight:700;-webkit-text-stroke:0.35px #111;">7</div><div class="t" style="left:307.5px;top:181.3px;font-size:9px;line-height:9px;color:#333;letter-spacing:1.00px;">侵略</div><div class="t" style="left:280.0px;top:202.5px;font-size:10.5px;line-height:10.5px;color:#111;font-weight:700;-webkit-text-stroke:0.35px #111;">8</div><div class="t" style="left:307.5px;top:203.3px;font-size:9px;line-height:9px;color:#333;letter-spacing:1.12px;">妄想・歪み</div><div class="t" style="left:280.0px;top:224.0px;font-size:10.5px;line-height:10.5px;color:#111;font-weight:700;-webkit-text-stroke:0.35px #111;">9</div><div class="t" style="left:307.5px;top:224.8px;font-size:9px;line-height:9px;color:#333;letter-spacing:1.25px;">病理的</div><div class="t" style="left:425.0px;top:77.1px;font-size:14px;line-height:14px;color:#2f6db5;">常</div><div class="t" style="left:425.0px;top:90.9px;font-size:14px;line-height:14px;color:#2f6db5;">に</div><div class="t" style="left:425.0px;top:104.6px;font-size:14px;line-height:14px;color:#2f6db5;">変</div><div class="t" style="left:425.0px;top:118.4px;font-size:14px;line-height:14px;color:#2f6db5;">化</div><div class="t" style="left:425.0px;top:132.1px;font-size:14px;line-height:14px;color:#2f6db5;">変</div><div class="t" style="left:425.0px;top:145.9px;font-size:14px;line-height:14px;color:#2f6db5;">動</div><div class="t" style="left:425.0px;top:159.6px;font-size:14px;line-height:14px;color:#2f6db5;">す</div><div class="t" style="left:425.0px;top:173.4px;font-size:14px;line-height:14px;color:#2f6db5;">る</div><div style="position:absolute;left:0;top:0;width:481px;height:271px;box-sizing:border-box;border:1px solid #a3a399;border-right-color:#eef2e0;border-bottom-color:#eef2e0"></div></div><div class="sl" style="left:580px;top:660px"><svg style="position:absolute;left:0;top:0" width="481" height="271" fill="none"><path d="M8 87C18 150 30 215 57 271" stroke="#6f6a55" stroke-width="1.3"/><path d="M25.5 52C18 120 17 190 48 271" stroke="#6f6a55" stroke-width="0.9"/><path d="M94 126C60 160 35 200 40 230S44 262 45 271" stroke="#6f6a55" stroke-width="1.1"/><path d="M111 57C70 95 38 160 36 215S40 260 42 271" stroke="#b9bca6" stroke-width="0.8"/><path d="M8 137C15 190 30 240 45 271" stroke="#b9bca6" stroke-width="0.9"/><path d="M8 100C20 170 35 230 52 271" stroke="#8a866f" stroke-width="0.7"/></svg><div style="position:absolute;left:0;top:0;width:8px;height:271px;background:#746b52"></div><svg style="position:absolute;left:0;top:29px" width="63" height="20"><path d="M0 0H52.0L62 10.0L52.0 20H0z" fill="#a93111"/></svg><div class="t" style="left:78.0px;top:28.2px;font-size:17px;line-height:17px;color:#222;letter-spacing:0.67px;">健全と不健全は表裏一体？？</div><div style="position:absolute;left:125px;top:53.75px;width:84.5px;height:35.75px;background:linear-gradient(#82bba4,#5c9f88);border-radius:7px;"></div><div style="position:absolute;left:278px;top:53px;width:84.5px;height:35.75px;background:linear-gradient(#82bba4,#5c9f88);border-radius:7px;"></div><svg style="position:absolute;left:0px;top:0px" width="481" height="271"><path d="M220 70.875L232.875 58V67.125H255.125V58L268 70.875L255.125 83.75V74.625H232.875V83.75Z" fill="#6daa91"/><rect x="38" y="94.5" width="70.25" height="41.75" rx="7" fill="#c5d0aa" stroke="#9fb071" stroke-width="0.8"/><rect x="160" y="94.5" width="70.5" height="41.75" rx="7" fill="#c5d0aa" stroke="#9fb071" stroke-width="0.8"/><rect x="251.25" y="94.5" width="70.5" height="41.75" rx="7" fill="#c5d0aa" stroke="#9fb071" stroke-width="0.8"/><rect x="376.25" y="94.5" width="70.5" height="41.75" rx="7" fill="#c5d0aa" stroke="#9fb071" stroke-width="0.8"/><rect x="36.25" y="148.25" width="70.5" height="42.25" rx="7" fill="#c5d0aa" stroke="#9fb071" stroke-width="0.8"/><rect x="160" y="148.25" width="70.5" height="42.25" rx="7" fill="#c5d0aa" stroke="#9fb071" stroke-width="0.8"/><rect x="251.25" y="148.25" width="70.5" height="42.25" rx="7" fill="#c5d0aa" stroke="#9fb071" stroke-width="0.8"/><rect x="376.25" y="148.25" width="70.5" height="42.25" rx="7" fill="#c5d0aa" stroke="#9fb071" stroke-width="0.8"/><path d="M115.5 115.625L129.875 101.25V110.625H138.125V101.25L152.5 115.625L138.125 130V120.625H129.875V130Z" fill="#c5d0aa" stroke="#9fb071" stroke-width="0.8"/><path d="M329.5 115.625L343.875 101.25V110.625H351.875V101.25L366.25 115.625L351.875 130V120.625H343.875V130Z" fill="#c5d0aa" stroke="#9fb071" stroke-width="0.8"/><path d="M115.5 170.0L130.5 155V165.0H137.5V155L152.5 170.0L137.5 185V175.0H130.5V185Z" fill="#c5d0aa" stroke="#9fb071" stroke-width="0.8"/><path d="M329.5 170.0L344.5 155V165.0H351.25V155L366.25 170.0L351.25 185V175.0H344.5V185Z" fill="#c5d0aa" stroke="#9fb071" stroke-width="0.8"/><path d="M196 222.25L213.25 205V213.5H273.75V205L291 222.25L273.75 239.5V231.0H213.25V239.5Z" fill="#e38a3c"/><polygon points="219.9,228.5 237.4,236.5 246.5,232.2 251.3,237.6 273.1,236 270.4,243.4 291.2,244.5 278.4,250.3 297,253.5 280,257.2 290.6,262.6 272,262 272.6,270 258.2,263.6 251.8,266.8 235.9,261.5 219.4,262.6 220.4,257.2 198.6,258.6 209.8,252.4 201.3,250.3 206.6,246.1 184.3,241.3 211.4,239.1 203.4,234.9 220.4,237.6" fill="#b597d3"/></svg><div style="position:absolute;left:64.25px;top:199.25px;width:130.25px;height:50.25px;background:linear-gradient(#eba25c,#d9802c);border-radius:9px;"></div><div style="position:absolute;left:293px;top:199.25px;width:130.75px;height:50.25px;background:linear-gradient(#eba25c,#d9802c);border-radius:9px;"></div><div class="t" style="left:151.2px;top:65.4px;font-size:16px;line-height:16px;color:#fff;">健全</div><div class="t" style="left:296.8px;top:64.2px;font-size:16px;line-height:16px;color:#fff;letter-spacing:-0.50px;">不健全</div><div class="t" style="left:57.5px;top:99.2px;font-size:16px;line-height:16px;color:#222;letter-spacing:-1.00px;">思い</div><div class="t" style="left:57.5px;top:117.4px;font-size:16px;line-height:16px;color:#222;letter-spacing:-1.00px;">やり</div><div class="t" style="left:180.0px;top:99.2px;font-size:16px;line-height:16px;color:#222;letter-spacing:-1.50px;">依存</div><div class="t" style="left:180.0px;top:117.4px;font-size:16px;line-height:16px;color:#222;letter-spacing:-1.50px;">操作</div><div class="t" style="left:271.5px;top:107.9px;font-size:16px;line-height:16px;color:#222;letter-spacing:-2.00px;">自信</div><div class="t" style="left:396.5px;top:99.2px;font-size:16px;line-height:16px;color:#222;letter-spacing:-2.00px;">支配</div><div class="t" style="left:396.5px;top:117.4px;font-size:16px;line-height:16px;color:#222;letter-spacing:-2.00px;">傲慢</div><div class="t" style="left:47.8px;top:161.7px;font-size:16px;line-height:16px;color:#222;letter-spacing:-0.25px;">創造的</div><div class="t" style="left:167.5px;top:160.7px;font-size:14px;line-height:14px;color:#222;letter-spacing:-0.17px;">被害妄想</div><div class="t" style="left:271.5px;top:161.7px;font-size:16px;line-height:16px;color:#222;letter-spacing:-2.00px;">自由</div><div class="t" style="left:396.5px;top:161.7px;font-size:16px;line-height:16px;color:#222;letter-spacing:-2.00px;">束縛</div><div class="t" style="left:96.0px;top:209.7px;font-size:15px;line-height:15px;color:#fff;letter-spacing:-2.00px;font-weight:700;-webkit-text-stroke:0.35px #fff;">本質として</div><div class="t" style="left:92.0px;top:227.7px;font-size:16px;line-height:16px;color:#fff;letter-spacing:-1.25px;font-weight:700;-webkit-text-stroke:0.35px #fff;">健全な表出</div><div class="t" style="left:324.5px;top:209.7px;font-size:15px;line-height:15px;color:#fff;letter-spacing:-1.75px;font-weight:700;-webkit-text-stroke:0.35px #fff;">防衛として</div><div class="t" style="left:322.5px;top:227.7px;font-size:16px;line-height:16px;color:#fff;letter-spacing:-2.00px;font-weight:700;-webkit-text-stroke:0.35px #fff;">歪んだ表出</div><div class="t" style="left:205.5px;top:217.6px;font-size:9.5px;line-height:9.5px;color:#333;letter-spacing:-0.07px;">根源の恐れの作用</div><div class="t" style="left:230.0px;top:239.3px;font-size:10px;line-height:10px;color:#333;">別人に</div><div class="t" style="left:230.0px;top:250.8px;font-size:10px;line-height:10px;color:#333;">見える</div><div style="position:absolute;left:0;top:0;width:481px;height:271px;box-sizing:border-box;border:1px solid #a3a399;border-right-color:#eef2e0;border-bottom-color:#eef2e0"></div></div><div class="sl" style="left:1115px;top:660px"><svg style="position:absolute;left:0;top:0" width="481" height="271" fill="none"><path d="M8 87C18 150 30 215 57 271" stroke="#6f6a55" stroke-width="1.3"/><path d="M25.5 52C18 120 17 190 48 271" stroke="#6f6a55" stroke-width="0.9"/><path d="M94 126C60 160 35 200 40 230S44 262 45 271" stroke="#6f6a55" stroke-width="1.1"/><path d="M111 57C70 95 38 160 36 215S40 260 42 271" stroke="#b9bca6" stroke-width="0.8"/><path d="M8 137C15 190 30 240 45 271" stroke="#b9bca6" stroke-width="0.9"/><path d="M8 100C20 170 35 230 52 271" stroke="#8a866f" stroke-width="0.7"/></svg><div style="position:absolute;left:0;top:0;width:8px;height:271px;background:#746b52"></div><svg style="position:absolute;left:0;top:29px" width="63" height="20"><path d="M0 0H52.0L62 10.0L52.0 20H0z" fill="#a93111"/></svg><div class="t" style="left:64.5px;top:18.7px;font-size:17px;line-height:17px;color:#222;letter-spacing:0.36px;">健全度を上げるには・・・</div><div class="t" style="left:64.5px;top:39.2px;font-size:17px;line-height:17px;color:#222;letter-spacing:1.00px;">①自分の根源的恐れ・欲求を知る</div><div style="position:absolute;left:82.5px;top:57.5px;width:251.25px;height:1.2px;background:#222"></div><div style="position:absolute;left:42px;top:78px;width:123.5px;height:33.25px;background:#fff;border:2px solid #a33a20;box-sizing:border-box"></div><svg style="position:absolute;left:0px;top:0px" width="481" height="271"><defs><linearGradient id="g7" x1="0" y1="0" x2="0" y2="1"><stop offset="0" stop-color="#82bba4"/><stop offset="1" stop-color="#5c9f88"/></linearGradient><linearGradient id="gg7" x1="0" y1="0" x2="0" y2="1"><stop offset="0" stop-color="#9ab35e"/><stop offset="1" stop-color="#7d993e"/></linearGradient></defs><path d="M180.5 80.5H278V67L306.25 94.75L278 122.5V108.75H180.5L190 94.75Z" fill="url(#g7)"/><rect x="321" y="74" width="121" height="46.75" fill="url(#gg7)"/><circle cx="128" cy="195" r="62" fill="none" stroke="#95ad55" stroke-width="8"/><path d="M70 149L85 146L83 161Z" fill="#95ad55"/></svg><div style="position:absolute;left:85px;top:126.25px;width:90.75px;height:33.75px;background:#69aa92;border-radius:6px;border:1px solid #fff;box-sizing:border-box"></div><div style="position:absolute;left:165.75px;top:174.25px;width:75px;height:32.75px;background:#69aa92;border-radius:6px;border:1px solid #fff;box-sizing:border-box"></div><div style="position:absolute;left:148.25px;top:233.75px;width:74.25px;height:27px;background:#69aa92;border-radius:6px;border:1px solid #fff;box-sizing:border-box"></div><div style="position:absolute;left:37.5px;top:232px;width:77.5px;height:31.75px;background:#69aa92;border-radius:6px;border:1px solid #fff;box-sizing:border-box"></div><div style="position:absolute;left:23px;top:177px;width:67.75px;height:27.5px;background:#69aa92;border-radius:6px;border:1px solid #fff;box-sizing:border-box"></div><div class="t" style="left:74.2px;top:81.3px;font-size:12px;line-height:12px;color:#222;letter-spacing:-0.12px;">基本タイプ</div><div class="t" style="left:68.5px;top:95.0px;font-size:12px;line-height:12px;color:#222;letter-spacing:-0.20px;">囚われ・恐れ</div><div class="t" style="left:197.5px;top:89.6px;font-size:9.5px;line-height:9.5px;color:#fff;">受容する、糧にする</div><div class="t" style="left:327.8px;top:77.2px;font-size:15px;line-height:15px;color:#fff;letter-spacing:0.42px;">成長・成熟した</div><div class="t" style="left:338.8px;top:95.6px;font-size:18px;line-height:18px;color:#fff;letter-spacing:-1.12px;">健全な状態</div><div class="t" style="left:95.7px;top:133.4px;font-size:15px;line-height:15px;color:#fff;letter-spacing:-1.38px;">根源的恐れ</div><div class="t" style="left:173.8px;top:183.2px;font-size:13px;line-height:13px;color:#fff;letter-spacing:-1.50px;">根源的欲求</div><div class="t" style="left:157.9px;top:238.4px;font-size:15px;line-height:15px;color:#fff;letter-spacing:-1.67px;">自動思考</div><div class="t" style="left:46.8px;top:241.1px;font-size:10px;line-height:10px;color:#fff;letter-spacing:-0.20px;">行動パターン</div><div class="t" style="left:36.4px;top:180.9px;font-size:15px;line-height:15px;color:#fff;letter-spacing:-2.00px;">習慣化</div><div class="t" style="left:105.0px;top:190.0px;font-size:12px;line-height:12px;color:#444;letter-spacing:-0.33px;">性格構造</div><div class="t" style="left:246.2px;top:145.3px;font-size:11.5px;line-height:11.5px;color:#222;letter-spacing:0.01px;">■健全度を下げる</div><div class="t" style="left:245.0px;top:159.5px;font-size:11.5px;line-height:11.5px;color:#222;letter-spacing:-0.03px;">根源的恐れから生まれた自動思考が常習化</div><div class="t" style="left:257.5px;top:173.3px;font-size:11.5px;line-height:11.5px;color:#222;letter-spacing:-0.25px;">⇒マイナスな考え方の癖</div><div class="t" style="left:246.2px;top:202.8px;font-size:11.5px;line-height:11.5px;color:#222;letter-spacing:0.01px;">■健全度を上げる</div><div class="t" style="left:245.0px;top:217.3px;font-size:11.5px;line-height:11.5px;color:#222;letter-spacing:-0.06px;">自分の癖に気づき、別の行動を選ぶ練習</div><div class="t" style="left:257.5px;top:231.5px;font-size:11.5px;line-height:11.5px;color:#222;letter-spacing:-0.22px;">⇒自他共に良い環境・行動へ適応する</div><div style="position:absolute;left:0;top:0;width:481px;height:271px;box-sizing:border-box;border:1px solid #a3a399;border-right-color:#eef2e0;border-bottom-color:#eef2e0"></div></div><div class="sl" style="left:1650px;top:660px"><svg style="position:absolute;left:0;top:0" width="481" height="271" fill="none"><path d="M8 87C18 150 30 215 57 271" stroke="#6f6a55" stroke-width="1.3"/><path d="M25.5 52C18 120 17 190 48 271" stroke="#6f6a55" stroke-width="0.9"/><path d="M94 126C60 160 35 200 40 230S44 262 45 271" stroke="#6f6a55" stroke-width="1.1"/><path d="M111 57C70 95 38 160 36 215S40 260 42 271" stroke="#b9bca6" stroke-width="0.8"/><path d="M8 137C15 190 30 240 45 271" stroke="#b9bca6" stroke-width="0.9"/><path d="M8 100C20 170 35 230 52 271" stroke="#8a866f" stroke-width="0.7"/></svg><div style="position:absolute;left:0;top:0;width:8px;height:271px;background:#746b52"></div><svg style="position:absolute;left:0;top:29px" width="63" height="20"><path d="M0 0H52.0L62 10.0L52.0 20H0z" fill="#a93111"/></svg><div class="t" style="left:77.5px;top:15.6px;font-size:17px;line-height:17px;color:#222;letter-spacing:0.55px;">健全度を上げるには・・・</div><div class="t" style="left:77.5px;top:36.6px;font-size:17px;line-height:17px;color:#222;letter-spacing:1.00px;">②健全度の現在地点を知る</div><div style="position:absolute;left:77.5px;top:54px;width:215px;height:1.2px;background:#222"></div><div class="t" style="left:92.0px;top:66.3px;font-size:15px;line-height:15px;color:#222;letter-spacing:-0.25px;">主観的かつ客観的にどんな状態であるかを知る</div><svg style="position:absolute;left:0px;top:0px" width="481" height="271"><circle cx="133.75" cy="119.25" r="31.25" fill="#94ad4c"/><circle cx="193" cy="119.25" r="31.25" fill="#94ad4c"/><circle cx="249.75" cy="119.25" r="31.25" fill="#94ad4c"/><circle cx="303.75" cy="119.25" r="31.25" fill="#94ad4c"/><circle cx="359.5" cy="119.25" r="31.25" fill="#94ad4c"/><path d="M218.75 153.75H274.25V165H301.25L246 177.5L191.25 165H218.75Z" fill="#a9cbbb" stroke="#86b7a0" stroke-width="0.8"/><path d="M372 188L340.5 202.5L372 214Z" fill="#aacdbf" stroke="#7fb09a" stroke-width="0.8"/><rect x="368.75" y="151.25" width="95.75" height="73.25" rx="10" fill="#aacdbf" stroke="#7fb09a" stroke-width="0.8"/><rect x="369.3" y="188.6" width="3" height="25" fill="#aacdbf"/></svg><div style="position:absolute;left:162px;top:180px;width:170.5px;height:47.5px;background:linear-gradient(#82bba4,#5c9f88);border-radius:9px;"></div><div class="t" style="left:188.2px;top:193.6px;font-size:22px;line-height:22px;color:#fff;letter-spacing:-3.20px;">メタ認知能力</div><div class="t" style="left:375.0px;top:161.3px;font-size:8px;line-height:8px;color:#333;letter-spacing:1.25px;">※メタ認知</div><div class="t" style="left:375.0px;top:171.3px;font-size:8px;line-height:8px;color:#333;letter-spacing:1.06px;">自分の思考や行動を</div><div class="t" style="left:375.0px;top:183.3px;font-size:8px;line-height:8px;color:#333;letter-spacing:1.00px;">客観的に把握し、</div><div class="t" style="left:375.0px;top:193.3px;font-size:8px;line-height:8px;color:#333;letter-spacing:1.06px;">修正・管理する能力</div><div class="t" style="left:378.0px;top:203.8px;font-size:8px;line-height:8px;color:#333;letter-spacing:-0.67px;">（自制と内省）</div><div class="t" style="left:55.0px;top:235.6px;font-size:18px;line-height:18px;color:#222;letter-spacing:-0.17px;">メタ認知を鍛えて自己制御する＝健全度を上げる</div><div style="position:absolute;left:53.25px;top:252.8px;width:395.5px;height:2.3px;background:#e3191b"></div><div class="t" style="left:118.2px;top:113.5px;font-size:15px;line-height:15px;color:#fff;letter-spacing:1.00px;">思考</div><div class="t" style="left:177.5px;top:113.5px;font-size:15px;line-height:15px;color:#fff;letter-spacing:1.00px;">行動</div><div class="t" style="left:234.2px;top:113.5px;font-size:15px;line-height:15px;color:#fff;letter-spacing:1.00px;">感情</div><div class="t" style="left:288.2px;top:113.5px;font-size:15px;line-height:15px;color:#fff;letter-spacing:1.00px;">自我</div><div class="t" style="left:344.0px;top:113.5px;font-size:15px;line-height:15px;color:#fff;letter-spacing:1.00px;">欲求</div><div style="position:absolute;left:0;top:0;width:481px;height:271px;box-sizing:border-box;border:1px solid #a3a399;border-right-color:#eef2e0;border-bottom-color:#eef2e0"></div></div><div class="sl" style="left:45px;top:1007px"><svg style="position:absolute;left:0;top:0" width="481" height="271" fill="none"><path d="M8 87C18 150 30 215 57 271" stroke="#6f6a55" stroke-width="1.3"/><path d="M25.5 52C18 120 17 190 48 271" stroke="#6f6a55" stroke-width="0.9"/><path d="M94 126C60 160 35 200 40 230S44 262 45 271" stroke="#6f6a55" stroke-width="1.1"/><path d="M111 57C70 95 38 160 36 215S40 260 42 271" stroke="#b9bca6" stroke-width="0.8"/><path d="M8 137C15 190 30 240 45 271" stroke="#b9bca6" stroke-width="0.9"/><path d="M8 100C20 170 35 230 52 271" stroke="#8a866f" stroke-width="0.7"/></svg><div style="position:absolute;left:0;top:0;width:8px;height:271px;background:#746b52"></div><svg style="position:absolute;left:0;top:29px" width="63" height="20"><path d="M0 0H52.0L62 10.0L52.0 20H0z" fill="#a93111"/></svg><div class="t" style="left:64.5px;top:18.7px;font-size:17px;line-height:17px;color:#222;letter-spacing:0.36px;">健全度を上げるには・・・</div><div class="t" style="left:64.5px;top:39.2px;font-size:17px;line-height:17px;color:#222;letter-spacing:0.84px;">③自分のセンターのテーマを知る</div><div style="position:absolute;left:82.5px;top:57.5px;width:248.75px;height:1.2px;background:#222"></div><div style="position:absolute;left:43.25px;top:74.25px;width:123px;height:33.25px;background:#fff;border:2px solid #a33a20;box-sizing:border-box"></div><svg style="position:absolute;left:0px;top:0px" width="481" height="271"><defs><linearGradient id="gg9" x1="0" y1="0" x2="0" y2="1"><stop offset="0" stop-color="#9ab35e"/><stop offset="1" stop-color="#7d993e"/></linearGradient></defs><path d="M183.25 76.25H280V64.5L306.25 91L280 117.5V105H183.25L192 90.6Z" fill="#e2862f"/><rect x="320" y="65" width="120.75" height="43" fill="url(#gg9)"/></svg><div style="position:absolute;left:58px;top:122px;width:95.75px;height:46.75px;background:linear-gradient(#82bba4,#5c9f88);border-radius:8px;"></div><div style="position:absolute;left:197px;top:122px;width:96.75px;height:46.75px;background:linear-gradient(#82bba4,#5c9f88);border-radius:8px;"></div><div style="position:absolute;left:337px;top:122px;width:95.5px;height:46.75px;background:linear-gradient(#82bba4,#5c9f88);border-radius:8px;"></div><div class="t" style="left:51.2px;top:77.5px;font-size:12px;line-height:12px;color:#222;letter-spacing:-0.06px;">各センターのテーマ</div><div class="t" style="left:69.5px;top:91.3px;font-size:12px;line-height:12px;color:#222;letter-spacing:-0.20px;">囚われ・恐れ</div><div class="t" style="left:199.2px;top:79.6px;font-size:9.5px;line-height:9.5px;color:#fff;">基本タイプから</div><div class="t" style="left:199.2px;top:91.3px;font-size:9.5px;line-height:9.5px;color:#fff;letter-spacing:-0.07px;">視野を広げる指標</div><div class="t" style="left:332.9px;top:66.9px;font-size:15.5px;line-height:15.5px;color:#fff;letter-spacing:-0.20px;">一貫性のある</div><div class="t" style="left:340.6px;top:85.7px;font-size:15.5px;line-height:15.5px;color:#fff;letter-spacing:-0.12px;">受容・理解</div><div class="t" style="left:76.4px;top:135.8px;font-size:20px;line-height:20px;color:#fff;letter-spacing:-0.50px;">ヘッド</div><div class="t" style="left:215.7px;top:135.8px;font-size:20px;line-height:20px;color:#fff;letter-spacing:-0.25px;">ガッツ</div><div class="t" style="left:355.2px;top:135.8px;font-size:20px;line-height:20px;color:#fff;letter-spacing:-0.50px;">ハート</div><div class="t" style="left:89.3px;top:180.7px;font-size:15.5px;line-height:15.5px;color:#222;letter-spacing:-0.25px;">恐怖</div><svg style="position:absolute;left:0px;top:0px" width="481" height="271"><path d="M105.2 204V218M102.2 214.5L105.2 218.5L108.2 214.5" stroke="#222" stroke-width="1" fill="none"/></svg><div class="t" style="left:65.7px;top:219.4px;font-size:15.5px;line-height:15.5px;color:#222;letter-spacing:-0.25px;">信頼・勇気</div><div class="t" style="left:49.6px;top:239.4px;font-size:15.5px;line-height:15.5px;color:#222;letter-spacing:-2.39px;">「自分を信じる」</div><div class="t" style="left:229.8px;top:180.7px;font-size:15.5px;line-height:15.5px;color:#222;letter-spacing:-1.50px;">怒り</div><svg style="position:absolute;left:0px;top:0px" width="481" height="271"><path d="M245 204V218M242 214.5L245 218.5L248 214.5" stroke="#222" stroke-width="1" fill="none"/></svg><div class="t" style="left:205.2px;top:219.4px;font-size:15.5px;line-height:15.5px;color:#222;letter-spacing:-0.12px;">調和・平静</div><div class="t" style="left:196.9px;top:239.4px;font-size:15.5px;line-height:15.5px;color:#222;letter-spacing:-2.62px;">「周りを見る」</div><div class="t" style="left:380.6px;top:180.7px;font-size:15.5px;line-height:15.5px;color:#222;">恥</div><svg style="position:absolute;left:0px;top:0px" width="481" height="271"><path d="M388.6 204V218M385.6 214.5L388.6 218.5L391.6 214.5" stroke="#222" stroke-width="1" fill="none"/></svg><div class="t" style="left:349.1px;top:219.4px;font-size:15.5px;line-height:15.5px;color:#222;letter-spacing:-0.25px;">価値・自愛</div><div class="t" style="left:340.7px;top:239.4px;font-size:15.5px;line-height:15.5px;color:#222;letter-spacing:-2.71px;">「自分を愛す」</div><div style="position:absolute;left:0;top:0;width:481px;height:271px;box-sizing:border-box;border:1px solid #a3a399;border-right-color:#eef2e0;border-bottom-color:#eef2e0"></div></div><div class="sl" style="left:580px;top:1007px"><svg style="position:absolute;left:0;top:0" width="481" height="271" fill="none"><path d="M8 87C18 150 30 215 57 271" stroke="#6f6a55" stroke-width="1.3"/><path d="M25.5 52C18 120 17 190 48 271" stroke="#6f6a55" stroke-width="0.9"/><path d="M94 126C60 160 35 200 40 230S44 262 45 271" stroke="#6f6a55" stroke-width="1.1"/><path d="M111 57C70 95 38 160 36 215S40 260 42 271" stroke="#b9bca6" stroke-width="0.8"/><path d="M8 137C15 190 30 240 45 271" stroke="#b9bca6" stroke-width="0.9"/><path d="M8 100C20 170 35 230 52 271" stroke="#8a866f" stroke-width="0.7"/></svg><div style="position:absolute;left:0;top:0;width:8px;height:271px;background:#746b52"></div><svg style="position:absolute;left:0;top:29px" width="63" height="20"><path d="M0 0H52.0L62 10.0L52.0 20H0z" fill="#a93111"/></svg><div class="t" style="left:70.5px;top:27.1px;font-size:17px;line-height:17px;color:#222;letter-spacing:-1.16px;">メタ認知するには：タイプの全体像を把握する</div><svg style="position:absolute;left:0px;top:0px" width="481" height="271"><rect x="35.75" y="49.5" width="424.25" height="11.25" fill="#6aaa8f"/><rect x="86.25" y="62.5" width="373.75" height="20.50" fill="#d6e6e0"/><rect x="86.25" y="83" width="373.75" height="24.50" fill="#e9f1ee"/><rect x="86.25" y="107.5" width="373.75" height="23.25" fill="#d6e6e0"/><rect x="86.25" y="130.75" width="373.75" height="25.50" fill="#e9f1ee"/><rect x="86.25" y="156.25" width="373.75" height="25.75" fill="#d6e6e0"/><rect x="86.25" y="182" width="373.75" height="22.50" fill="#e9f1ee"/><rect x="86.25" y="204.5" width="373.75" height="21.75" fill="#d6e6e0"/><rect x="86.25" y="226.25" width="373.75" height="22.00" fill="#e9f1ee"/><rect x="86.25" y="248.25" width="373.75" height="20.50" fill="#d6e6e0"/><rect x="35.75" y="62.5" width="50.5" height="68.25" fill="#6aaa8f"/><rect x="35.75" y="130.75" width="50.5" height="73.75" fill="#f5c79d"/><rect x="35.75" y="204.5" width="50.5" height="64.25" fill="#f19a82"/><path d="M86.25 49.5V269M129.25 49.5V269M209.25 49.5V269" stroke="#fff" stroke-width="0.8"/><path d="M86.25 62.5H460" stroke="#fff" stroke-width="0.6"/><path d="M86.25 83H460" stroke="#fff" stroke-width="0.6"/><path d="M86.25 107.5H460" stroke="#fff" stroke-width="0.6"/><path d="M86.25 130.75H460" stroke="#fff" stroke-width="0.6"/><path d="M86.25 156.25H460" stroke="#fff" stroke-width="0.6"/><path d="M86.25 182H460" stroke="#fff" stroke-width="0.6"/><path d="M86.25 204.5H460" stroke="#fff" stroke-width="0.6"/><path d="M86.25 226.25H460" stroke="#fff" stroke-width="0.6"/><path d="M86.25 248.25H460" stroke="#fff" stroke-width="0.6"/></svg><div class="t" style="left:96.5px;top:51.4px;font-size:7px;line-height:7px;color:#fff;letter-spacing:1.00px;font-weight:700;-webkit-text-stroke:0.35px #fff;">レベル</div><div class="t" style="left:161.5px;top:51.4px;font-size:7px;line-height:7px;color:#fff;letter-spacing:1.00px;font-weight:700;-webkit-text-stroke:0.35px #fff;">状態</div><div class="t" style="left:327.0px;top:51.4px;font-size:7px;line-height:7px;color:#fff;letter-spacing:1.00px;font-weight:700;-webkit-text-stroke:0.35px #fff;">概要</div><div class="t" style="left:49.0px;top:89.3px;font-size:12px;line-height:12px;color:#fff;font-weight:700;-webkit-text-stroke:0.35px #fff;">健全</div><div class="t" style="left:49.0px;top:160.0px;font-size:12px;line-height:12px;color:#fff;font-weight:700;-webkit-text-stroke:0.35px #fff;">通常</div><div class="t" style="left:43.5px;top:229.3px;font-size:12px;line-height:12px;color:#fff;letter-spacing:-0.50px;font-weight:700;-webkit-text-stroke:0.35px #fff;">不健全</div><div class="t" style="left:105.4px;top:67.6px;font-size:9.5px;line-height:9.5px;color:#333;">1</div><div class="t" style="left:132.5px;top:67.8px;font-size:9px;line-height:9px;color:#333;letter-spacing:1.50px;">解放</div><div class="t" style="left:212.0px;top:67.8px;font-size:9px;line-height:9px;color:#333;letter-spacing:0.78px;">根源的恐れの克服。本質が十分に作用する。悟り。</div><div class="t" style="left:105.4px;top:90.6px;font-size:9.5px;line-height:9.5px;color:#333;">2</div><div class="t" style="left:132.5px;top:90.8px;font-size:9px;line-height:9px;color:#333;letter-spacing:1.12px;">心理的受容</div><div class="t" style="left:212.0px;top:90.8px;font-size:9px;line-height:9px;color:#333;letter-spacing:0.75px;">自己理解、自然体、心理的安定。</div><div class="t" style="left:105.4px;top:114.3px;font-size:9.5px;line-height:9.5px;color:#333;">3</div><div class="t" style="left:132.5px;top:114.6px;font-size:9px;line-height:9px;color:#333;letter-spacing:1.12px;">社会的価値</div><div class="t" style="left:212.0px;top:114.6px;font-size:9px;line-height:9px;color:#333;letter-spacing:0.85px;">社会の中で能力を発揮できる。良い形で役割を果たす。</div><div class="t" style="left:105.4px;top:138.3px;font-size:9.5px;line-height:9.5px;color:#333;">4</div><div class="t" style="left:132.5px;top:138.6px;font-size:9px;line-height:9px;color:#333;letter-spacing:1.08px;">不均衡・不安定</div><div class="t" style="left:212.0px;top:138.6px;font-size:9px;line-height:9px;color:#333;letter-spacing:0.74px;">ストレスの認知。行動特性が強く表れる。</div><div class="t" style="left:105.4px;top:164.6px;font-size:9.5px;line-height:9.5px;color:#333;">5</div><div class="t" style="left:132.5px;top:164.8px;font-size:9px;line-height:9px;color:#333;letter-spacing:1.50px;">防衛</div><div class="t" style="left:212.0px;top:164.8px;font-size:9px;line-height:9px;color:#333;letter-spacing:0.78px;">自己防衛のため、対人操作やコントロールをする。</div><div class="t" style="left:105.4px;top:188.3px;font-size:9.5px;line-height:9.5px;color:#333;">6</div><div class="t" style="left:132.5px;top:188.6px;font-size:9px;line-height:9px;color:#333;letter-spacing:1.25px;">過補償</div><div class="t" style="left:212.0px;top:188.6px;font-size:9px;line-height:9px;color:#333;letter-spacing:0.76px;">苦しさを隠すため、極端な行動や言動になる。</div><div class="t" style="left:105.4px;top:210.6px;font-size:9.5px;line-height:9.5px;color:#333;">7</div><div class="t" style="left:132.5px;top:210.8px;font-size:9px;line-height:9px;color:#333;letter-spacing:1.50px;">侵略</div><div class="t" style="left:212.0px;top:210.8px;font-size:9px;line-height:9px;color:#333;letter-spacing:0.72px;">周囲を巻き込み、自己防衛に奔走する。</div><div class="t" style="left:105.4px;top:231.3px;font-size:9.5px;line-height:9.5px;color:#333;">8</div><div class="t" style="left:132.5px;top:231.6px;font-size:9px;line-height:9px;color:#333;letter-spacing:1.12px;">妄想・歪み</div><div class="t" style="left:212.0px;top:231.6px;font-size:9px;line-height:9px;color:#333;letter-spacing:0.75px;">自己、現実の認識がゆがみ、衝動的になる。</div><div class="t" style="left:105.4px;top:253.1px;font-size:9.5px;line-height:9.5px;color:#333;">9</div><div class="t" style="left:132.5px;top:253.3px;font-size:9px;line-height:9px;color:#333;letter-spacing:1.25px;">病理的</div><div class="t" style="left:212.0px;top:253.3px;font-size:9px;line-height:9px;color:#333;letter-spacing:0.60px;">自己破壊、他者破壊に陥る。</div><div style="position:absolute;left:0;top:0;width:481px;height:271px;box-sizing:border-box;border:1px solid #a3a399;border-right-color:#eef2e0;border-bottom-color:#eef2e0"></div></div><div class="sl" style="left:1115px;top:1007px"><svg style="position:absolute;left:0;top:0" width="481" height="271" fill="none"><path d="M8 87C18 150 30 215 57 271" stroke="#6f6a55" stroke-width="1.3"/><path d="M25.5 52C18 120 17 190 48 271" stroke="#6f6a55" stroke-width="0.9"/><path d="M94 126C60 160 35 200 40 230S44 262 45 271" stroke="#6f6a55" stroke-width="1.1"/><path d="M111 57C70 95 38 160 36 215S40 260 42 271" stroke="#b9bca6" stroke-width="0.8"/><path d="M8 137C15 190 30 240 45 271" stroke="#b9bca6" stroke-width="0.9"/><path d="M8 100C20 170 35 230 52 271" stroke="#8a866f" stroke-width="0.7"/></svg><div style="position:absolute;left:0;top:0;width:8px;height:271px;background:#746b52"></div><svg style="position:absolute;left:0;top:29px" width="63" height="20"><path d="M0 0H52.0L62 10.0L52.0 20H0z" fill="#a93111"/></svg><div class="t" style="left:79.5px;top:28.1px;font-size:17px;line-height:17px;color:#222;letter-spacing:0.54px;">どんなトレーニングがある？</div><div class="t" style="left:78.0px;top:59.6px;font-size:14px;line-height:14px;color:#222;letter-spacing:-1.59px;">各タイプの要素＋悩みや状況に応じて、</div><div class="t" style="left:78.0px;top:75.2px;font-size:14px;line-height:14px;color:#222;letter-spacing:-2.44px;">適切なトレーニングを選択、実践、調整。</div><svg style="position:absolute;left:0px;top:0px" width="481" height="271"><defs><linearGradient id="g11" x1="0" y1="0" x2="0" y2="1"><stop offset="0" stop-color="#82bba4"/><stop offset="1" stop-color="#5c9f88"/></linearGradient></defs><g fill="#b393cc"><ellipse cx="395.4" cy="58" rx="58" ry="19"/><circle cx="360" cy="49" r="11"/><circle cx="385" cy="43.5" r="10"/><circle cx="411" cy="43" r="10"/><circle cx="436" cy="46" r="11"/><circle cx="446" cy="58" r="9"/><circle cx="434" cy="70" r="10"/><circle cx="406" cy="72" r="9"/><circle cx="378" cy="71" r="9.5"/><circle cx="352" cy="65" r="10"/><circle cx="345" cy="55" r="8.5"/><circle cx="339.5" cy="75" r="3.5"/><circle cx="327" cy="79.5" r="2.3"/><circle cx="317.5" cy="82.5" r="1.4"/></g><path d="M28 170.0V117.25Q28 109.25 36 109.25H121.75L130.75 118.25V170.0Z" fill="url(#g11)"/><path d="M253 170.0V117.25Q253 109.25 261 109.25H346.75L355.75 118.25V170.0Z" fill="url(#g11)"/><path d="M23 253.75V198Q23 190 31 190H121.75L130.75 199V253.75Z" fill="url(#g11)"/><path d="M254.25 253.75V198Q254.25 190 262.25 190H346.75L355.75 199V253.75Z" fill="url(#g11)"/></svg><div class="t" style="left:371.0px;top:44.8px;font-size:10px;line-height:10px;color:#fff;">少しずつ</div><div class="t" style="left:356.1px;top:57.3px;font-size:10px;line-height:10px;color:#fff;letter-spacing:-0.17px;">変化させていく</div><div class="t" style="left:43.2px;top:129.5px;font-size:12px;line-height:12px;color:#fff;letter-spacing:0.10px;font-weight:700;-webkit-text-stroke:0.35px #fff;">認知行動療法</div><div class="t" style="left:63.9px;top:143.6px;font-size:10px;line-height:10px;color:#fff;letter-spacing:-2.25px;">（CBT）</div><div class="t" style="left:268.9px;top:129.5px;font-size:12px;line-height:12px;color:#fff;letter-spacing:-0.20px;font-weight:700;-webkit-text-stroke:0.35px #fff;">メタ認知訓練</div><div class="t" style="left:288.9px;top:143.6px;font-size:10px;line-height:10px;color:#fff;letter-spacing:-2.67px;">（MCT）</div><div class="t" style="left:41.2px;top:200.8px;font-size:10.5px;line-height:10.5px;color:#fff;letter-spacing:-1.17px;font-weight:700;-webkit-text-stroke:0.35px #fff;">アクセプタンス</div><div class="t" style="left:72.5px;top:212.8px;font-size:10.5px;line-height:10.5px;color:#fff;font-weight:700;-webkit-text-stroke:0.35px #fff;">&amp;</div><div class="t" style="left:30.9px;top:224.5px;font-size:10.5px;line-height:10.5px;color:#fff;letter-spacing:-1.03px;font-weight:700;-webkit-text-stroke:0.35px #fff;">コミットメント療法</div><div class="t" style="left:61.2px;top:236.1px;font-size:10px;line-height:10px;color:#fff;letter-spacing:-2.50px;">（ACT）</div><div class="t" style="left:280.7px;top:206.2px;font-size:13px;line-height:13px;color:#fff;letter-spacing:-1.75px;font-weight:700;-webkit-text-stroke:0.35px #fff;">作業療法</div><div class="t" style="left:263.7px;top:222.8px;font-size:9px;line-height:9px;color:#fff;letter-spacing:-0.03px;">身体感覚・感情認識</div><div class="t" style="left:281.9px;top:232.3px;font-size:9px;line-height:9px;color:#fff;letter-spacing:-0.12px;">認知再構成</div><div class="t" style="left:135.0px;top:119.8px;font-size:10px;line-height:10px;color:#333;letter-spacing:-0.07px;">目的：思考の修正</div><div class="t" style="left:135.0px;top:131.8px;font-size:10px;line-height:10px;color:#333;letter-spacing:-0.25px;">①思考の修正</div><div class="t" style="left:135.0px;top:144.1px;font-size:10px;line-height:10px;color:#333;letter-spacing:-0.20px;">②感情の調整</div><div class="t" style="left:135.0px;top:156.1px;font-size:10px;line-height:10px;color:#333;letter-spacing:-0.06px;">③目標を合理的に変換</div><div class="t" style="left:364.5px;top:111.8px;font-size:10px;line-height:10px;color:#333;letter-spacing:-0.08px;">目的：自己認知を認知</div><div class="t" style="left:364.5px;top:124.0px;font-size:10px;line-height:10px;color:#333;letter-spacing:-0.11px;">①思考ラベリング</div><div class="t" style="left:364.5px;top:136.1px;font-size:10px;line-height:10px;color:#333;letter-spacing:-0.19px;">②思考観察</div><div class="t" style="left:364.5px;top:147.8px;font-size:10px;line-height:10px;color:#333;letter-spacing:-0.15px;">③注意シフト</div><div class="t" style="left:364.5px;top:159.8px;font-size:10px;line-height:10px;color:#333;letter-spacing:-0.12px;">④思考の距離化</div><div class="t" style="left:138.8px;top:203.6px;font-size:10px;line-height:10px;color:#333;letter-spacing:-0.08px;">目的：思考と戦わない</div><div class="t" style="left:138.8px;top:216.1px;font-size:10px;line-height:10px;color:#333;letter-spacing:-0.12px;">①思考を手放す</div><div class="t" style="left:138.8px;top:228.1px;font-size:10px;line-height:10px;color:#333;letter-spacing:-0.11px;">②感情を受容する</div><div class="t" style="left:138.8px;top:240.3px;font-size:10px;line-height:10px;color:#333;letter-spacing:-0.12px;">③価値観に則る</div><div class="t" style="left:362.5px;top:197.8px;font-size:10px;line-height:10px;color:#333;letter-spacing:-0.07px;">目的：心身の統合</div><div class="t" style="left:392.5px;top:209.8px;font-size:10px;line-height:10px;color:#333;letter-spacing:-0.10px;">生活の再調整</div><div class="t" style="left:362.5px;top:221.8px;font-size:10px;line-height:10px;color:#333;letter-spacing:-0.19px;">・身体感覚を取り戻す</div><div class="t" style="left:362.5px;top:234.1px;font-size:10px;line-height:10px;color:#333;letter-spacing:-0.22px;">・生活行動の再構築</div><div class="t" style="left:362.5px;top:246.1px;font-size:10px;line-height:10px;color:#333;letter-spacing:-1.14px;">・オリジナルプログラム他</div><div style="position:absolute;left:0;top:0;width:481px;height:271px;box-sizing:border-box;border:1px solid #a3a399;border-right-color:#eef2e0;border-bottom-color:#eef2e0"></div></div><div style="position:absolute;left:1646px;top:1003px;width:489px;height:279px;background:#b3afa9"></div><div class="sl" style="left:1650px;top:1007px"><svg style="position:absolute;left:0;top:0" width="481" height="271" fill="none"><path d="M8 87C18 150 30 215 57 271" stroke="#6f6a55" stroke-width="1.3"/><path d="M25.5 52C18 120 17 190 48 271" stroke="#6f6a55" stroke-width="0.9"/><path d="M94 126C60 160 35 200 40 230S44 262 45 271" stroke="#6f6a55" stroke-width="1.1"/><path d="M111 57C70 95 38 160 36 215S40 260 42 271" stroke="#b9bca6" stroke-width="0.8"/><path d="M8 137C15 190 30 240 45 271" stroke="#b9bca6" stroke-width="0.9"/><path d="M8 100C20 170 35 230 52 271" stroke="#8a866f" stroke-width="0.7"/></svg><div style="position:absolute;left:0;top:0;width:8px;height:271px;background:#746b52"></div><svg style="position:absolute;left:0;top:194px" width="64" height="20"><path d="M0 0H53.0L63 10.0L53.0 20H0z" fill="#a93111"/></svg><div class="t" style="left:211.2px;top:144.4px;font-size:24px;line-height:24px;color:#222;letter-spacing:-0.81px;">エニアグラム　健全度</div><div class="t" style="left:344.5px;top:175.0px;font-size:23px;line-height:23px;color:#222;letter-spacing:0.40px;">2026.3.15</div><div class="t" style="left:333.8px;top:205.3px;font-size:9.5px;line-height:9.5px;color:#555;letter-spacing:-1.15px;">エニアグラムカウンセリング</div><div class="t" style="left:326.2px;top:221.1px;font-size:9.5px;line-height:9.5px;color:#555;letter-spacing:-0.52px;">Risa　Mitsutsuka　@ねこざめ</div><div style="position:absolute;left:0;top:0;width:481px;height:271px;box-sizing:border-box;border:1px solid #a3a399;border-right-color:#eef2e0;border-bottom-color:#eef2e0"></div></div><div class="t" style="left:47.0px;top:599.6px;font-size:22px;line-height:22px;color:#f2f2f2;">1</div><div class="t" style="left:582.0px;top:599.6px;font-size:22px;line-height:22px;color:#f2f2f2;">2</div><div class="t" style="left:1117.0px;top:599.6px;font-size:22px;line-height:22px;color:#f2f2f2;">3</div><div class="t" style="left:1652.0px;top:599.6px;font-size:22px;line-height:22px;color:#f2f2f2;">4</div><div class="t" style="left:47.0px;top:946.6px;font-size:22px;line-height:22px;color:#f2f2f2;">5</div><div class="t" style="left:582.0px;top:946.6px;font-size:22px;line-height:22px;color:#f2f2f2;">6</div><div class="t" style="left:1117.0px;top:946.6px;font-size:22px;line-height:22px;color:#f2f2f2;">7</div><div class="t" style="left:1652.0px;top:946.6px;font-size:22px;line-height:22px;color:#f2f2f2;">8</div><div class="t" style="left:47.0px;top:1293.6px;font-size:22px;line-height:22px;color:#f2f2f2;">9</div><div class="t" style="left:582.0px;top:1293.6px;font-size:22px;line-height:22px;color:#f2f2f2;">10</div><div class="t" style="left:1117.0px;top:1293.6px;font-size:22px;line-height:22px;color:#f2f2f2;">11</div><div class="t" style="left:1652.0px;top:1293.6px;font-size:22px;line-height:22px;color:#f2f2f2;">12</div><div style="position:absolute;left:0px;top:1384px;width:2256px;height:1px;background:#4d4d4d"></div><div style="position:absolute;left:0px;top:1385px;width:2256px;height:47px;background:#676767"></div><div style="position:absolute;left:1729px;top:1385px;width:62px;height:47px;background:#4a4a4a"></div><div style="position:absolute;left:0px;top:1432px;width:2256px;height:2px;background:#3c4a52"></div><div class="t" style="left:26.0px;top:1401.2px;font-size:17px;line-height:17px;color:#ffffff;letter-spacing:-4.00px;">スライド</div><div class="t" style="left:87.0px;top:1400.6px;font-size:18px;line-height:18px;color:#ffffff;letter-spacing:0.65px;">1/12</div><div class="t" style="left:235.0px;top:1400.9px;font-size:17.5px;line-height:17.5px;color:#ffffff;letter-spacing:-0.50px;">日本語</div><div class="t" style="left:357.0px;top:1401.2px;font-size:17px;line-height:17px;color:#ffffff;letter-spacing:-2.47px;">アクセシビリティ: 問題ありません</div><svg style="position:absolute;left:0;top:1385px" width="2256" height="47" fill="none" stroke="#fff" stroke-width="1.4"><path d="M171.5 15h9.5v16h-9.5z M181 15h8.5v4M189.5 25v6H181" stroke-width="1.3"/><path d="M181 31v1.5" stroke-width="1.3"/><path d="M184.5 26.5l7-7 2 2-7 7-2.6.6z" fill="none" stroke-width="1.2"/><path d="M339 15a8.5 8.5 0 0 0-3 14.5" stroke-dasharray="2.5 1.6" stroke-width="1.5"/><path d="M342 14v9M339 20l3 3 3-3" stroke-width="1.5"/><path d="M346 24l3-2.5-3-2.5M342 21.5h7" stroke-width="1.3"/><path d="M340 29l3.5 3.5 7.5-8.5" stroke-width="2"/><rect x="1689.2" y="15" width="18.8" height="17.5" stroke-width="1.2"/><rect x="1689" y="15" width="6" height="17.7" fill="#fff" stroke="none"/><rect x="1697.5" y="18.3" width="6.5" height="5.8" stroke-width="1.2"/><path d="M1695 28.5h13" stroke-width="1"/><rect x="1750" y="14" width="9" height="8" fill="#fff" stroke="none"/><rect x="1761" y="14" width="9" height="8" fill="#fff" stroke="none"/><rect x="1750" y="24" width="9" height="8" fill="#fff" stroke="none"/><rect x="1761" y="24" width="9" height="8" fill="#fff" stroke="none"/><path d="M1813 15.5q4.5-1 9.5 1.5v16q-5-2.5-9.5-1.5z M1822.5 17q5-2.5 9.5-1.5v16q-4.5-1-9.5 1.5" stroke-width="1.2"/><path d="M1815.3 19.5h5M1815.3 22.5h5M1815.3 25.5h5M1815.3 28.5h5M1824.7 19.5h5M1824.7 22.5h5M1824.7 25.5h5M1824.7 28.5h5" stroke-width="1"/><path d="M1874.5 15.5h19.5" stroke-width="1.6"/><path d="M1876.5 16v10.5h15.5V16M1884.2 26.5v6M1879.5 32.5h9.5M1880.5 21h7.5" stroke-width="1.2"/><path d="M1923 22.3h12M2098.5 22h12.3M2104.7 15.8v12.3" stroke-width="1.2"/><path d="M1942.7 22.5h148" stroke-width="2.6"/><rect x="2012.8" y="14.3" width="8.2" height="16.3" fill="#fff" stroke="none"/><rect x="2227" y="14.5" width="14.5" height="14.5" stroke-width="1.2"/><path d="M2234.2 15.5v4M2232.5 17.5l1.7-2 1.7 2M2234.2 28v-4M2232.5 26l1.7 2 1.7-2M2228 21.8h4M2230 20.1l-2 1.7 2 1.7M2240.5 21.8h-4M2238.5 20.1l2 1.7-2 1.7" stroke-width="1"/></svg><div class="t" style="left:2138.0px;top:1400.1px;font-size:19px;line-height:19px;color:#ffffff;letter-spacing:0.80px;">100%</div><div style="position:absolute;left:0px;top:1434px;width:2256px;height:70px;background:#172a38"></div><svg style="position:absolute;left:0;top:0" width="2256" height="1504"><g><defs><linearGradient id="cl" x1="0" y1="0" x2="0" y2="1"><stop offset="0" stop-color="#c9dcfa"/><stop offset="0.7" stop-color="#b4cdf5"/><stop offset="1" stop-color="#8aa8ee"/></linearGradient><linearGradient id="win" x1="0" y1="0" x2="1" y2="1"><stop offset="0" stop-color="#86d8fc"/><stop offset="1" stop-color="#1b8cef"/></linearGradient><linearGradient id="edg" x1="0" y1="1" x2="1" y2="0"><stop offset="0" stop-color="#1a6fd0"/><stop offset="0.55" stop-color="#2ea6e6"/><stop offset="1" stop-color="#5bd66a"/></linearGradient><linearGradient id="fld" x1="0" y1="0" x2="0" y2="1"><stop offset="0" stop-color="#fed45a"/><stop offset="1" stop-color="#f8bb26"/></linearGradient><linearGradient id="cnv" x1="0" y1="0" x2="0.6" y2="1"><stop offset="0" stop-color="#1ec7c6"/><stop offset="0.5" stop-color="#3f7fe0"/><stop offset="1" stop-color="#8a2ef0"/></linearGradient><linearGradient id="npd" x1="0" y1="0" x2="0" y2="1"><stop offset="0" stop-color="#8fd8f2"/><stop offset="1" stop-color="#46b2de"/></linearGradient><clipPath id="pill"><rect x="446" y="1446" width="326" height="43.5" rx="21.7"/></clipPath></defs><circle cx="56" cy="1462" r="9" fill="#f08a1e"/><path d="M33 1484.5h30a5.5 5.5 0 0 0 2.5-10.5a9 9 0 0 0-11-7a10 10 0 0 0-17 1a7 7 0 0 0-4.5 16.5z" fill="url(#cl)"/><circle cx="58.3" cy="1454" r="12.3" fill="#d4301c"/><rect x="389" y="1451.5" width="16.5" height="16.5" rx="2" fill="url(#win)"/><rect x="407.5" y="1451.5" width="16.5" height="16.5" rx="2" fill="url(#win)"/><rect x="389" y="1469.5" width="16.5" height="16.5" rx="2" fill="url(#win)"/><rect x="407.5" y="1469.5" width="16.5" height="16.5" rx="2" fill="url(#win)"/><rect x="446" y="1446" width="326" height="43.5" rx="21.7" fill="#eff0f2"/><circle cx="472" cy="1466.5" r="7.2" fill="none" stroke="#222" stroke-width="2.2"/><path d="M477.5 1472l5.5 5.5" stroke="#222" stroke-width="2.6" stroke-linecap="round"/><circle cx="710.7" cy="1468.4" r="13" fill="#4a9ee0"/><path d="M702 1460c4-4 10-4 13 0l-2 6-5 2-1 6-4-2c-2-4-3-8-1-12z M716 1462l5 3 1 6-4 3z" fill="#3f8d3a"/><path d="M698 1470q13 5 26 0" stroke="#e26a3a" stroke-width="1.2" fill="none"/><path d="M710.7 1452v33" stroke="#e8553a" stroke-width="1"/><path d="M726 1457h11M726 1468h11M726 1479h11M729 1454l-3 3 3 3M729 1465l-3 3 3 3M729 1476l-3 3 3 3" stroke="#8b9fb8" stroke-width="2" fill="none"/><g clip-path="url(#pill)"><ellipse cx="766" cy="1468.5" rx="24" ry="19.5" fill="#f6c23e"/><path d="M745 1452q-6 16 0 34" stroke="#e4761c" stroke-width="2.5" fill="none" stroke-dasharray="2.5 2"/></g><circle cx="810" cy="1467.5" r="18" fill="url(#edg)"/><path d="M792.5 1472c2 9 10 14 18 14 6 0 11-2 14-6-6 3-14 2-19-3-4-4-4-10 1-13-7 0-13 3-14 8z" fill="#1b5fb8"/><circle cx="811" cy="1467" r="5.5" fill="#172a38"/><path d="M805 1467c0-4 4-7 8-6" stroke="#2aa0e6" stroke-width="3" fill="none"/><path d="M858 1452h12l3 3h21v29h-36z" fill="#e3a812"/><rect x="858" y="1456" width="36" height="28" rx="1" fill="url(#fld)"/><path d="M864 1484v-8a3 3 0 0 1 3-3h18a3 3 0 0 1 3 3v8z" fill="#1d84e0"/><path d="M870 1478h12" stroke="#0f4f9a" stroke-width="1.5"/><path d="M925 1463l16-11 17 11v19a2 2 0 0 1-2 2h-29a2 2 0 0 1-2-2z" fill="#3aa6f0"/><path d="M930 1458l11-6 17 11-12 8z" fill="#7b7ff0"/><path d="M935 1462l10-6 13 7-9 6z" fill="#4a57d8"/><path d="M925 1468l17 9 16-12v17a2 2 0 0 1-2 2h-29a2 2 0 0 1-2-2z" fill="#36b3f5"/><rect x="924" y="1465.5" width="15" height="14.5" rx="2" fill="#1264c8"/><circle cx="931.5" cy="1472.7" r="4" fill="none" stroke="#fff" stroke-width="1.8"/><rect x="1000" y="1452" width="25.5" height="32" rx="1.5" fill="#1e6fd0"/><rect x="1007" y="1454" width="18" height="10" fill="#43a8f2"/><path d="M1000 1468h25.5v16h-25.5z" fill="#2a8be6"/><path d="M1000 1468l12.7 8 12.8-8" fill="#57b6f5"/><rect x="990" y="1459" width="17.5" height="18" rx="1.5" fill="#1163c4"/><circle cx="998.7" cy="1468" r="4.6" fill="none" stroke="#fff" stroke-width="2"/><rect x="1127" y="1455" width="26" height="29" rx="2" fill="#8cc4ea"/><rect x="1122.7" y="1455" width="26" height="29" rx="2" fill="#a9d6f3"/><circle cx="1134.4" cy="1469" r="10" fill="#f58a22"/><path d="M1131 1463.5l9 5.5-9 5.5z" fill="#fff"/><rect x="1198" y="1450" width="15" height="25.5" rx="3" fill="#a2a6aa"/><rect x="1198" y="1465" width="15" height="10.5" rx="2" fill="#4a4e52"/><circle cx="1205.3" cy="1469.4" r="2.5" fill="#f0602a"/><path d="M1196 1463v7a9.3 9.3 0 0 0 18.6 0v-7" stroke="#9a9ea2" stroke-width="2.2" fill="none"/><path d="M1205.3 1479v5M1199 1485h12.5" stroke="#9a9ea2" stroke-width="2.4"/><circle cx="1271.9" cy="1467.5" r="18.2" fill="#db3a2c"/><path d="M1271.9 1467.5L1256.1 1476.6A18.2 18.2 0 0 0 1275 1485.4Z" fill="#1f9d4a"/><path d="M1271.9 1467.5L1275 1485.4A18.2 18.2 0 0 0 1290 1465.5Z" fill="#f5c01c"/><path d="M1271.9 1467.5L1256.1 1476.6A18.2 18.2 0 0 1 1257 1457Z" fill="#1f9d4a"/><circle cx="1271.9" cy="1467.5" r="9.2" fill="#fff"/><circle cx="1271.9" cy="1467.5" r="7.4" fill="#3b78e7"/><rect x="1324" y="1452" width="28" height="34" rx="2" fill="url(#npd)"/><path d="M1329 1461h18M1329 1467h18M1329 1473h18" stroke="#1a6e92" stroke-width="1.8"/><rect x="1324" y="1481" width="28" height="1.6" fill="#f6e8cf"/><rect x="1324" y="1482.6" width="28" height="3.4" rx="1" fill="#b8612a"/><circle cx="1330" cy="1452" r="1.6" fill="#1a6e92"/><circle cx="1337" cy="1452" r="1.6" fill="#1a6e92"/><circle cx="1344" cy="1452" r="1.6" fill="#1a6e92"/><circle cx="1351" cy="1452" r="1.6" fill="#1a6e92"/><rect x="1386" y="1450" width="36" height="36" fill="#1d9bf0"/><path d="M1393.5 1475.5c9.5 4.5 20-1 19.5-12.5l2.3-2.3-2.6.6c.3-2.4-3-4.2-5.5-2.3-1.6 1.3-1.5 3-1.4 4-3.8 0-6.8-1.8-9.3-4.6-1.1 2.6-.2 5.2 2.1 6.9h-1.8c.8 2.3 2.5 3.5 4.5 3.8-1.9 1.6-4.5 2.5-7.8 2.4z" fill="#fff"/><rect x="1451.7" y="1449.7" width="36.5" height="36.3" fill="#fefefe"/><path d="M1460 1466l2-9q9-4 17 3l-2 8z" fill="#b8421c" stroke="#e8a82a" stroke-width="1.2"/><path d="M1459 1467h21v13h-21z" fill="#c2471d" stroke="#e8a82a" stroke-width="1.2"/><path d="M1459 1472h21" stroke="#e8a82a" stroke-width="2"/><circle cx="1463" cy="1466" r="2.6" fill="#f6c93a"/><circle cx="1468" cy="1464.5" r="2.6" fill="#f9d548"/><circle cx="1473" cy="1465.5" r="2.6" fill="#f6c93a"/><circle cx="1477" cy="1467" r="2.3" fill="#f9d548"/><rect x="1467.5" y="1471" width="4" height="5" fill="#f4c64a"/><rect x="1521" y="1451.5" width="32.3" height="32.5" rx="1.5" fill="#1f5bbf"/><rect x="1526" y="1451.5" width="27.3" height="9" fill="#3c8ef0"/><rect x="1526" y="1460.5" width="27.3" height="8" fill="#2b74d8"/><rect x="1526" y="1468.5" width="27.3" height="8" fill="#235fc4"/><rect x="1517.7" y="1459" width="18.6" height="18" rx="1.5" fill="#1a4fb0"/><path d="M1520.5 1463l2.3 10 2.6-7.5 2.6 7.5 2.3-10" stroke="#fff" stroke-width="1.8" fill="none" stroke-linejoin="round"/><g fill="none" stroke="#fff" stroke-width="2.1" transform="translate(1602.2 1467.8) scale(1.12)"><path id="gp" d="M-6 -3.5V-10A7 7 0 0 1 7 -12.5L8 -11.5"/><use href="#gp" transform="rotate(60)"/><use href="#gp" transform="rotate(120)"/><use href="#gp" transform="rotate(180)"/><use href="#gp" transform="rotate(240)"/><use href="#gp" transform="rotate(300)"/></g><circle cx="1668.1" cy="1467.8" r="18.3" fill="url(#cnv)"/><rect x="1704.3" y="1438.3" width="59.2" height="59" rx="6" fill="#28343e"/><circle cx="1736.4" cy="1467.8" r="14.7" fill="#ed6c47"/><path d="M1736.4 1453.1A14.7 14.7 0 0 1 1751.1 1467.8H1736.4Z" fill="#ff8f6b"/><path d="M1736.4 1467.8H1751.1A14.7 14.7 0 0 1 1736.4 1482.5Z" fill="#d35230"/><rect x="1715.8" y="1459.3" width="18" height="17.8" rx="1.5" fill="#c43e1c"/><path d="M1722 1473v-10h3.3a3 3 0 0 1 0 6h-3.3" stroke="#fff" stroke-width="2" fill="none"/><rect x="1721.6" y="1492" width="24.1" height="4.5" rx="2.2" fill="#f5b03b"/><rect x="805.5" y="1492" width="9" height="5" rx="2.5" fill="#9aa2a8"/><rect x="870.5" y="1492" width="9" height="5" rx="2.5" fill="#9aa2a8"/><rect x="1268.1" y="1492" width="9" height="5" rx="2.5" fill="#9aa2a8"/><rect x="1333.9" y="1492" width="9" height="5" rx="2.5" fill="#9aa2a8"/><rect x="1400.1" y="1492" width="9" height="5" rx="2.5" fill="#9aa2a8"/><rect x="1465.8" y="1492" width="9" height="5" rx="2.5" fill="#9aa2a8"/><rect x="1531.8" y="1492" width="9" height="5" rx="2.5" fill="#9aa2a8"/><rect x="1597.7" y="1492" width="9" height="5" rx="2.5" fill="#9aa2a8"/><rect x="1663.9" y="1492" width="9" height="5" rx="2.5" fill="#9aa2a8"/><g fill="none" stroke="#fff" stroke-width="1.8"><path d="M1869 1471l8-8 8 8"/><rect x="1913" y="1459" width="27" height="17" rx="2"/><path d="M1917 1464h2M1922 1464h2M1927 1464h2M1932 1464h2M1921 1471h11"/><path d="M2009 1463a16 16 0 0 1 22 0M2013 1467a10 10 0 0 1 14 0M2017 1471a4 4 0 0 1 6 0"/><path d="M2045 1462h4l6-5v22l-6-5h-4z"/><path d="M2059 1462a6 6 0 0 1 0 12M2062 1459a10 10 0 0 1 0 18"/><rect x="2081" y="1460" width="27" height="16" rx="3"/><rect x="2108" y="1465" width="3" height="6" fill="#fff"/></g><rect x="2084" y="1463" width="21" height="10" fill="#6ad06a"/><path d="M2096 1456l-4 9h5l-3 8" stroke="#fff" stroke-width="1.6" fill="none"/></g></svg><div class="t" style="left:53.8px;top:1446.2px;font-size:16px;line-height:16px;color:#ffffff;">6</div><div class="t" style="left:1654.6px;top:1461.2px;font-size:13px;line-height:13px;color:#ffffff;letter-spacing:-1.55px;font-family:'Liberation Serif',serif;font-style:italic;">Canva</div><div class="t" style="left:500.6px;top:1457.1px;font-size:20px;line-height:20px;color:#555;">検索</div><div class="t" style="left:1961.0px;top:1456.6px;font-size:22px;line-height:22px;color:#ffffff;">あ</div><div class="t" style="left:2186.0px;top:1446.6px;font-size:18px;line-height:18px;color:#ffffff;letter-spacing:-0.76px;">17:18</div><div class="t" style="left:2136.0px;top:1470.6px;font-size:18px;line-height:18px;color:#ffffff;letter-spacing:0.21px;">2026/03/20</div></body></html>
